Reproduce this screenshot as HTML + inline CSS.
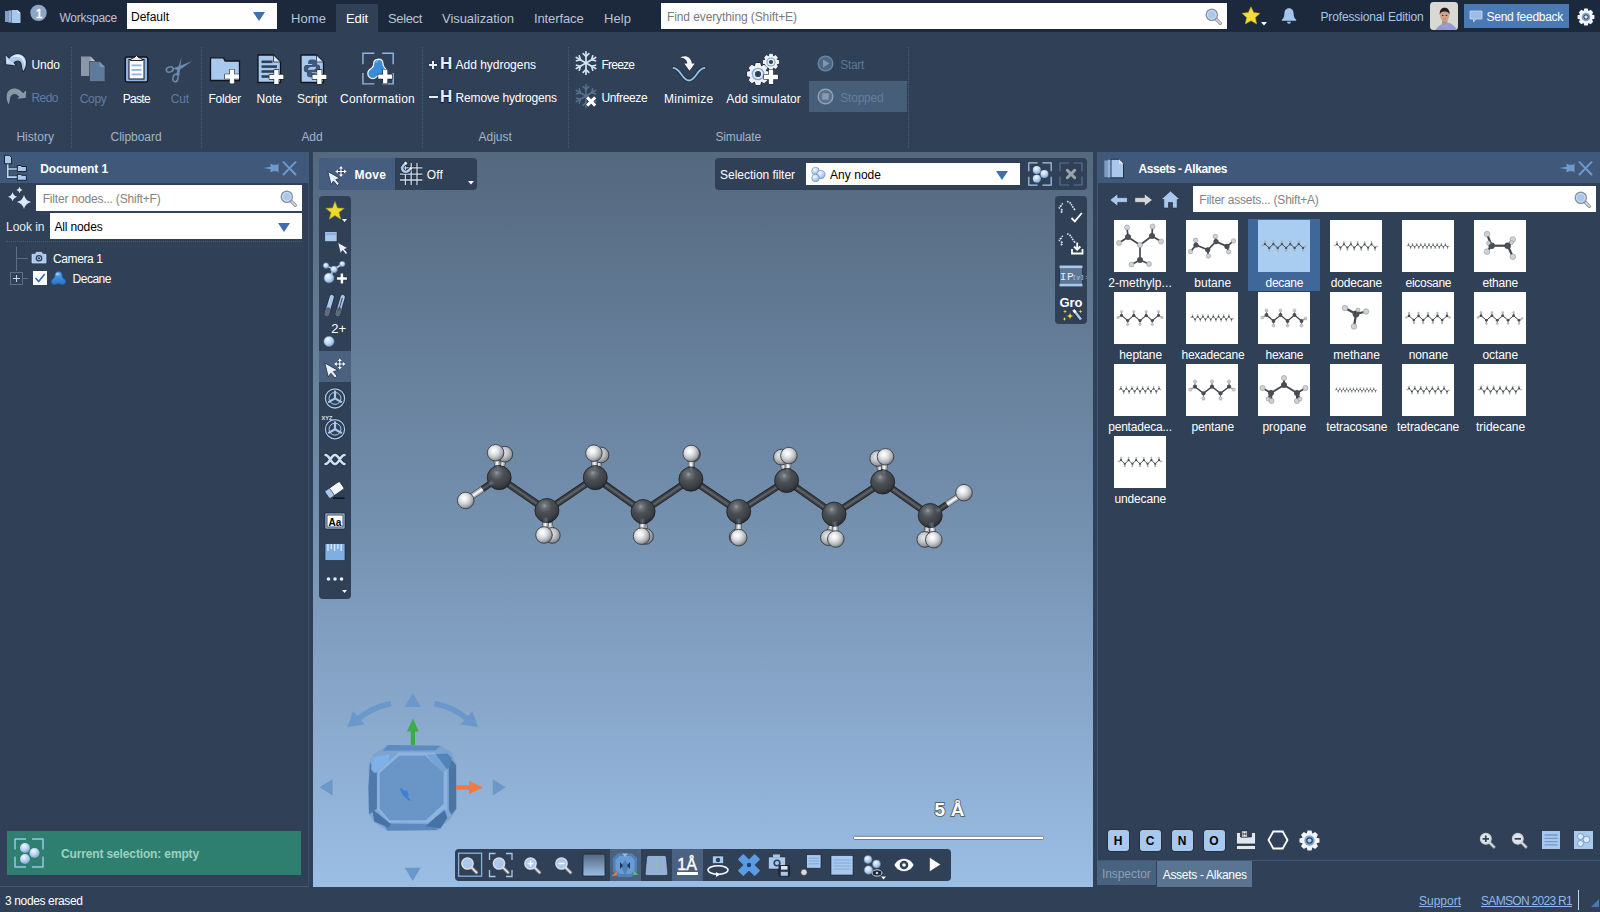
<!DOCTYPE html>
<html lang="en"><head><meta charset="utf-8"><title>SAMSON</title><style>
html,body{margin:0;padding:0;}
body{width:1600px;height:912px;overflow:hidden;background:#304056;position:relative;font-family:"Liberation Sans",sans-serif;}
.b{position:absolute;display:block;}
.t{position:absolute;white-space:nowrap;line-height:16px;display:block;}
</style></head>
<body>
<!-- top -->
<div class="b" style="left:0px;top:0px;width:1600px;height:32px;background:#1c283b;"></div>
<svg class="b" style="left:4px;top:9px;" width="18" height="15" viewBox="0 0 18 15"><rect x="1" y="2" width="3" height="11" fill="#7f9fc6"/><rect x="4.2" y="1.5" width="3" height="12" fill="#94b4da"/>
<path d="M7.5 1h6l3 3v10h-9z" fill="#a8c8ee"/><path d="M13.5 1v3h3z" fill="#dce9f8"/></svg>
<svg class="b" style="left:29px;top:4px;" width="19" height="19" viewBox="0 0 19 19"><circle cx="9.500" cy="8.850" r="8.200" fill="#8ca6c5"/></svg>
<span class="t " style="left:35.8px;top:5.8px;font-size:12px;color:#ffffff;letter-spacing:-0.67px;-webkit-text-stroke:.5px #fff;">1</span>
<span class="t " style="left:59.4px;top:10px;font-size:12px;color:#b9c5d6;letter-spacing:-0.24px;">Workspace</span>
<div class="b" style="left:127px;top:3px;width:150px;height:26px;background:#fff;"></div>
<span class="t " style="left:131px;top:9px;font-size:12px;color:#000;letter-spacing:-0.00px;">Default</span>
<svg class="b" style="left:253px;top:12px;" width="12" height="9" viewBox="0 0 12 9"><polygon points="0,0 12,0 6,9" fill="#3f6fae"/></svg>
<div class="b" style="left:336px;top:4px;width:42px;height:28px;background:#304056;"></div>
<span class="t " style="left:291px;top:11px;font-size:13px;color:#b9c5d6;letter-spacing:0.08px;">Home</span>
<span class="t " style="left:346px;top:11px;font-size:13px;color:#fff;letter-spacing:-0.10px;">Edit</span>
<span class="t " style="left:388px;top:11px;font-size:13px;color:#b9c5d6;letter-spacing:-0.35px;">Select</span>
<span class="t " style="left:442px;top:11px;font-size:13px;color:#b9c5d6;letter-spacing:-0.06px;">Visualization</span>
<span class="t " style="left:534px;top:11px;font-size:13px;color:#b9c5d6;letter-spacing:-0.12px;">Interface</span>
<span class="t " style="left:604px;top:11px;font-size:13px;color:#b9c5d6;letter-spacing:0.07px;">Help</span>
<div class="b" style="left:661px;top:3px;width:566px;height:26px;background:#fff;"></div>
<span class="t " style="left:667px;top:9px;font-size:12px;color:#7a7a7a;letter-spacing:-0.10px;">Find everything (Shift+E)</span>
<svg class="b" style="left:1205px;top:7.5px;" width="17" height="17" viewBox="0 0 17 17"><line x1="10.5" y1="10.5" x2="15.3" y2="15.3" stroke="#8a8f96" stroke-width="3.2" stroke-linecap="round"/>
<line x1="10.5" y1="10.5" x2="15.3" y2="15.3" stroke="#d8dde3" stroke-width="1.6" stroke-linecap="round"/>
<circle cx="6.8" cy="6.8" r="5.6" fill="#a9c8ee" stroke="#8c9198" stroke-width="1.4"/>
<circle cx="6.8" cy="6.8" r="4.3" fill="none" stroke="#d5e4f7" stroke-width="0.9"/></svg>
<svg class="b" style="left:1241px;top:6px;" width="20" height="19" viewBox="0 0 20 19"><polygon points="10,0.8 12.7,6.6 19,7.3 14.3,11.6 15.7,17.9 10,14.7 4.3,17.9 5.7,11.6 1,7.3 7.3,6.6" fill="#f2dd3a" stroke="#b9a51f" stroke-width="0.6"/></svg>
<svg class="b" style="left:1261px;top:21.5px;" width="6" height="4" viewBox="0 0 6 4"><polygon points="0,0 6,0 3,3.5" fill="#fff"/></svg>
<svg class="b" style="left:1280px;top:7px;" width="18" height="18" viewBox="0 0 18 18"><path d="M9 1.2c-3 0-4.6 2.3-4.6 5.2 0 3.4-1.2 5-2.6 6.3v1h14.4v-1c-1.4-1.3-2.6-2.9-2.6-6.300 0-2.9-1.600-5.200-4.600-5.200z" fill="#a5c4ea"/><path d="M7 14.800a2 2 0 0 0 4 0z" fill="#a5c4ea"/></svg>
<span class="t " style="left:1320.5px;top:9px;font-size:12px;color:#a9c6ea;letter-spacing:-0.15px;">Professional Edition</span>
<svg class="b" style="left:1430px;top:2px;" width="28" height="28" viewBox="0 0 28 28"><defs><clipPath id="avc"><rect width="28" height="28" rx="3.500"/></clipPath></defs><g clip-path="url(#avc)"><rect width="28" height="28" fill="#d9d8d3"/>
<path d="M5 28.500c2.500-4 6-6.800 9.500-7.300l4.500-.5c3.500 1.200 7 4.500 8.500 7.800z" fill="#9a98cf"/><path d="M11.500 24l5-3 3 1.500-4 4z" fill="#8fa6d8"/><path d="M12 17h5.500v4.300l-3.500 1.700-2-1.500z" fill="#b98f78"/>
<ellipse cx="14.600" cy="13.600" rx="4.600" ry="5.800" fill="#cda38b"/><path d="M9.800 13c-.5-4.500 1.500-7.200 4.800-7.200s5.500 2.600 4.900 7.200c-.5-2.300-1.500-3.600-4.900-3.600s-4.300 1.300-4.800 3.600z" fill="#231c17"/>
<ellipse cx="12.700" cy="13.400" rx=".9" ry=".6" fill="#4a3228"/><ellipse cx="16.400" cy="13.400" rx=".9" ry=".6" fill="#4a3228"/><path d="M13.200 16.800q1.400.8 2.800 0" stroke="#9a6a58" stroke-width=".6" fill="none"/></g></svg>
<div class="b" style="left:1464px;top:4px;width:105px;height:24px;background:#4b79b3;"></div>
<svg class="b" style="left:1469px;top:10px;" width="14" height="13" viewBox="0 0 14 13"><path d="M1 1h12v8h-6l-2.500 3v-3h-3.500z" fill="#9dbce4" stroke="#c8daf2" stroke-width="0.8"/></svg>
<span class="t " style="left:1486.5px;top:9px;font-size:12px;color:#fff;letter-spacing:-0.27px;">Send feedback</span>
<svg class="b" style="left:1577px;top:7.5px;" width="18" height="18" viewBox="0 0 18 18"><polygon points="17.43,7.29 17.43,10.71 14.92,11.43 14.91,11.47 16.17,13.75 13.75,16.17 11.47,14.91 11.43,14.92 10.71,17.43 7.29,17.43 6.57,14.92 6.53,14.91 4.25,16.17 1.83,13.75 3.09,11.47 3.08,11.43 0.57,10.71 0.57,7.29 3.08,6.57 3.09,6.53 1.83,4.25 4.25,1.83 6.53,3.09 6.57,3.08 7.29,0.57 10.71,0.57 11.43,3.08 11.47,3.09 13.75,1.83 16.17,4.25 14.91,6.53 14.92,6.57" fill="#f2f4f7"/><circle cx="9" cy="9" r="4.300" fill="#7fa3d0"/><circle cx="9" cy="9" r="2.500" fill="#1c283b"/><circle cx="9" cy="9" r="1.700" fill="#dfe8f3"/></svg>
<!-- ribbon -->
<div class="b" style="left:0px;top:32px;width:1600px;height:120px;background:#304056;"></div>
<svg class="b" style="left:3px;top:51px;" width="27" height="24" viewBox="0 0 27 24"><path d="M2.600 4.300L3 13.300L12.800 14.400L10.500 11.700C13 8.700 17 8.400 18.300 12C19.200 14.500 18.800 17 20.300 20.300C23.300 16 24.300 10 21.200 6C17.500 1.500 10 2.300 6.200 7.700Z" fill="#a8c8ee" stroke="#151b24" stroke-width="1.300" stroke-linejoin="round" paint-order="stroke"/><path d="M3.600 6l.300 6.300 6.500.8-1.500-1.800c-1.500-.5-3.500-2.500-5.300-5.300z" fill="#cfe1f6"/><path d="M8 7c3.500-4 9.500-4.300 12.300-.5 2.300 3 2 7 .8 10.500.3-4-.3-7-2.300-9-2.800-2.800-7-2.800-10.800-1z" fill="#e3eefb"/></svg>
<span class="t " style="left:31.5px;top:57px;font-size:12px;color:#fff;letter-spacing:-0.05px;">Undo</span>
<svg class="b" style="left:3px;top:84.5px;" width="27" height="24" viewBox="0 0 27 24"><g transform="translate(26.200,0) scale(-1,1)"><path d="M2.600 4.300L3 13.300L12.800 14.400L10.500 11.700C13 8.700 17 8.400 18.300 12C19.200 14.500 18.800 17 20.300 20.300C23.300 16 24.300 10 21.200 6C17.500 1.500 10 2.300 6.200 7.700Z" fill="#8a97a8" stroke="#2a3546" stroke-width=".8" stroke-linejoin="round"/></g></svg>
<span class="t " style="left:31.5px;top:90px;font-size:12px;color:#5f7da2;letter-spacing:-0.60px;">Redo</span>
<span class="t " style="left:16.4px;top:129px;font-size:12px;color:#a3b4c8;letter-spacing:0.04px;">History</span>
<div class="b" style="left:71px;top:47px;width:0;height:101px;border-left:1px dotted #42607a;"></div>
<svg class="b" style="left:79px;top:54px;" width="30" height="30" viewBox="0 0 30 30"><path d="M2 2.500h9.500l5 5v14.500h-14.500z" fill="#8b97a7"/><path d="M11.500 2.500v5h5z" fill="#b4bcc7"/>
<path d="M10.500 7.500h10l5.500 5.500v14.500h-15.500z" fill="#5f7b9c" stroke="#2b3a4e" stroke-width=".6"/><path d="M20.500 7.500v5.500h5.500z" fill="#7d97b5"/></svg>
<span class="t " style="left:79.7px;top:90.5px;font-size:12px;color:#5f7da2;letter-spacing:-0.30px;">Copy</span>
<svg class="b" style="left:123px;top:53px;" width="27" height="31" viewBox="0 0 27 31"><rect x="2.300" y="4" width="22.500" height="25" rx="2" fill="#8fb5e4" stroke="#10151c" stroke-width="1.400"/>
<rect x="6" y="6.500" width="15" height="19.500" fill="#fff" stroke="#10151c" stroke-width="1"/>
<path d="M7.500 7.500c0-2 2.500-2.500 4-3l2-2 2 2c1.500.5 4 1 4 3z" fill="#f2ede0" stroke="#10151c" stroke-width=".9"/>
<rect x="8.500" y="11.500" width="10" height="1.800" fill="#8fb5e4"/><rect x="8.500" y="16" width="10" height="1.800" fill="#8fb5e4"/><rect x="8.500" y="20.500" width="10" height="1.800" fill="#8fb5e4"/></svg>
<span class="t " style="left:122.8px;top:90.5px;font-size:12px;color:#fff;letter-spacing:-0.70px;">Paste</span>
<svg class="b" style="left:164px;top:55px;" width="31" height="29" viewBox="0 0 31 29"><g fill="none" stroke="#6c8cb1" stroke-width="1.500" stroke-linecap="round"><ellipse cx="5.800" cy="14.500" rx="3.600" ry="2.500" transform="rotate(-20 5.800 14.500)"/><ellipse cx="11.500" cy="23" rx="2.500" ry="3.800" transform="rotate(12 11.500 23)"/></g>
<path d="M9 13.500l19.500-7.500-14 9.500z" fill="#6c8cb1"/><path d="M12 19.500l5.500-17.500-2.300 19z" fill="#6c8cb1"/></svg>
<span class="t " style="left:170.8px;top:90.5px;font-size:12px;color:#5f7da2;letter-spacing:-0.16px;">Cut</span>
<span class="t " style="left:110.6px;top:129px;font-size:12px;color:#a3b4c8;letter-spacing:-0.04px;">Clipboard</span>
<div class="b" style="left:201px;top:47px;width:0;height:101px;border-left:1px dotted #42607a;"></div>
<svg class="b" style="left:208px;top:54px;" width="36" height="32" viewBox="0 0 36 32"><path d="M2.500 3.800h13l1.500 3.200h14.500v19.500h-29z" fill="#a8c8ee" stroke="#10151c" stroke-width="1.300" stroke-linejoin="round"/><path d="M21.8 15.5h4.4v4.8h4.8v4.4h-4.8v4.8h-4.4v-4.8h-4.8v-4.4h4.8z" fill="#fff" stroke="#1a222e" stroke-width="1.2" stroke-linejoin="round" paint-order="stroke"/></svg>
<span class="t " style="left:208.5px;top:90.5px;font-size:12px;color:#fff;letter-spacing:-0.25px;">Folder</span>
<svg class="b" style="left:256.6px;top:53.6px;" width="34" height="32" viewBox="0 0 34 32"><path d="M1 1h15.500l7 7v20.500h-22.500z" fill="#a8c8ee" stroke="#10151c" stroke-width="1.300" stroke-linejoin="round"/><path d="M16.500 1v7h7z" fill="#d9e7f7" stroke="#10151c" stroke-width=".7" stroke-linejoin="round"/><g fill="#2f3f55"><rect x="4.500" y="6.500" width="11" height="2.600"/><rect x="4.500" y="11.300" width="15.500" height="2.600"/><rect x="4.500" y="16.200" width="15.500" height="2.600"/><rect x="4.500" y="21.200" width="9" height="2.600"/></g><path d="M17.2 15.9h4.4v4.8h4.8v4.4h-4.8v4.8h-4.4v-4.8h-4.8v-4.4h4.8z" fill="#fff" stroke="#1a222e" stroke-width="1.2" stroke-linejoin="round" paint-order="stroke"/></svg>
<span class="t " style="left:256.6px;top:90.5px;font-size:12px;color:#fff;letter-spacing:0.01px;">Note</span>
<svg class="b" style="left:299.6px;top:53.6px;" width="34" height="32" viewBox="0 0 34 32"><path d="M1 1h15.500l7 7v20.500h-22.500z" fill="#a8c8ee" stroke="#10151c" stroke-width="1.300" stroke-linejoin="round"/><path d="M16.500 1v7h7z" fill="#d9e7f7" stroke="#10151c" stroke-width=".7" stroke-linejoin="round"/><g fill="#3f5778"><path d="M11.800 5.500c-3 0-3.600 1.300-3.600 2.600v2h4v.8h-5.700c-1.800 0-2.700 1.500-2.700 3.800s.9 3.600 2.500 3.600h1.700v-2.400c0-1.700 1.400-2.900 3-2.900h3.800c1.300 0 2.300-1 2.300-2.400v-2.500c0-1.400-1.200-2.600-5.300-2.600z"/><path d="M12.200 23.300c3 0 3.600-1.300 3.600-2.600v-2h-4v-.8h5.700c1.800 0 2.700-1.500 2.700-3.800s-.9-3.600-2.500-3.600h-1.700v2.400c0 1.700-1.400 2.900-3 2.900h-3.800c-1.300 0-2.300 1-2.300 2.400v2.500c0 1.400 1.200 2.600 5.300 2.600z"/></g><path d="M17.2 15.9h4.4v4.8h4.8v4.4h-4.8v4.8h-4.4v-4.8h-4.8v-4.4h4.8z" fill="#fff" stroke="#1a222e" stroke-width="1.2" stroke-linejoin="round" paint-order="stroke"/></svg>
<span class="t " style="left:297px;top:90.5px;font-size:12px;color:#fff;letter-spacing:-0.11px;">Script</span>
<svg class="b" style="left:362px;top:52px;" width="33" height="33.5" viewBox="0 0 36 36"><g fill="none" stroke="#8fb5e4" stroke-width="1.600"><path d="M1 13v-12h12.500"/><path d="M22 1h12v12"/><path d="M1 22.500v12h12.500"/><path d="M22 34.500h12v-12"/></g><path d="M17 5c3.500 0 5.800 2.500 5.800 5.800 0 2.500.8 3.800 2.500 5.500 2.500 2.500 2 6-1 7.500-2.800 1.400-5 .2-7.300 1.500-2 1.200-3 4-6.500 4-3.800 0-6.500-3-6.500-6.500 0-3.200 2-5 4.500-6.500 2.500-1.600 2.800-3 2.800-5.300 0-3.300 2.400-5.500 5.700-5.500z" transform="translate(2.800,3) scale(.88)" fill="#3a8cdb" stroke="#f2f6fb" stroke-width="1.500"/><path d="M14.500 10.500c1-1.600 3-2.300 4.800-1.300-1.600.2-3 1-3.800 2.800z" fill="#7fb7ec"/></svg>
<svg class="b" style="left:376px;top:67px;" width="20" height="20" viewBox="0 0 20 20"><path d="M7 2.6h4.4v4.8h4.8v4.4h-4.8v4.8h-4.4v-4.8h-4.8v-4.4h4.8z" fill="#fff" stroke="#1a222e" stroke-width="1.2" stroke-linejoin="round" paint-order="stroke"/></svg>
<span class="t " style="left:340px;top:90.5px;font-size:12px;color:#fff;letter-spacing:0.25px;">Conformation</span>
<span class="t " style="left:301.4px;top:129px;font-size:12px;color:#a3b4c8;letter-spacing:-0.05px;">Add</span>
<div class="b" style="left:422px;top:47px;width:0;height:101px;border-left:1px dotted #42607a;"></div>
<div class="b" style="left:428.8px;top:63.5px;width:8.4px;height:2.3px;background:#e6eef8;box-shadow:0 0 1.500px #10151c;"></div>
<div class="b" style="left:431.85px;top:60.5px;width:2.3px;height:8.3px;background:#e6eef8;box-shadow:0 0 1.500px #10151c;"></div>
<div class="b" style="left:428.8px;top:63.5px;width:8.4px;height:2.3px;background:#e6eef8;"></div>
<span class="t " style="left:440px;top:56.3px;font-size:17px;color:#e6eef8;letter-spacing:-1.08px;font-weight:bold;text-shadow:0 0 2px #10151c,0 1px 1px #10151c;">H</span>
<span class="t " style="left:455.6px;top:57px;font-size:12px;color:#fff;letter-spacing:-0.02px;">Add hydrogens</span>
<div class="b" style="left:429px;top:95.5px;width:8.6px;height:2.5px;background:#e6eef8;box-shadow:0 0 1.500px #10151c;"></div>
<span class="t " style="left:440px;top:89.3px;font-size:17px;color:#e6eef8;letter-spacing:-1.08px;font-weight:bold;text-shadow:0 0 2px #10151c,0 1px 1px #10151c;">H</span>
<span class="t " style="left:455.6px;top:90px;font-size:12px;color:#fff;letter-spacing:-0.17px;">Remove hydrogens</span>
<span class="t " style="left:478.4px;top:129px;font-size:12px;color:#a3b4c8;letter-spacing:0.04px;">Adjust</span>
<div class="b" style="left:568px;top:47px;width:0;height:101px;border-left:1px dotted #42607a;"></div>
<svg class="b" style="left:573px;top:50px;" width="26" height="26" viewBox="0 0 26 26"><g stroke="#d3e3f4" stroke-width="1.7" stroke-linecap="round" fill="none"><line x1="13.00" y1="13.00" x2="13.00" y2="24.20"/><line x1="13.00" y1="19.50" x2="15.85" y2="22.35"/><line x1="13.00" y1="19.50" x2="10.15" y2="22.35"/><line x1="13.00" y1="13.00" x2="3.30" y2="18.60"/><line x1="7.37" y1="16.25" x2="6.33" y2="20.14"/><line x1="7.37" y1="16.25" x2="3.48" y2="15.20"/><line x1="13.00" y1="13.00" x2="3.30" y2="7.40"/><line x1="7.37" y1="9.75" x2="3.48" y2="10.80"/><line x1="7.37" y1="9.75" x2="6.33" y2="5.86"/><line x1="13.00" y1="13.00" x2="13.00" y2="1.80"/><line x1="13.00" y1="6.50" x2="10.15" y2="3.65"/><line x1="13.00" y1="6.50" x2="15.85" y2="3.65"/><line x1="13.00" y1="13.00" x2="22.70" y2="7.40"/><line x1="18.63" y1="9.75" x2="19.67" y2="5.86"/><line x1="18.63" y1="9.75" x2="22.52" y2="10.80"/><line x1="13.00" y1="13.00" x2="22.70" y2="18.60"/><line x1="18.63" y1="16.25" x2="22.52" y2="15.20"/><line x1="18.63" y1="16.25" x2="19.67" y2="20.14"/></g></svg>
<span class="t " style="left:601.4px;top:57px;font-size:12px;color:#fff;letter-spacing:-0.74px;">Freeze</span>
<svg class="b" style="left:573px;top:83px;" width="26" height="26" viewBox="0 0 26 26"><g stroke="#56738f" stroke-width="1.5" stroke-linecap="round" fill="none"><line x1="13.00" y1="13.00" x2="13.00" y2="24.20"/><line x1="13.00" y1="19.50" x2="15.85" y2="22.35"/><line x1="13.00" y1="19.50" x2="10.15" y2="22.35"/><line x1="13.00" y1="13.00" x2="3.30" y2="18.60"/><line x1="7.37" y1="16.25" x2="6.33" y2="20.14"/><line x1="7.37" y1="16.25" x2="3.48" y2="15.20"/><line x1="13.00" y1="13.00" x2="3.30" y2="7.40"/><line x1="7.37" y1="9.75" x2="3.48" y2="10.80"/><line x1="7.37" y1="9.75" x2="6.33" y2="5.86"/><line x1="13.00" y1="13.00" x2="13.00" y2="1.80"/><line x1="13.00" y1="6.50" x2="10.15" y2="3.65"/><line x1="13.00" y1="6.50" x2="15.85" y2="3.65"/><line x1="13.00" y1="13.00" x2="22.70" y2="7.40"/><line x1="18.63" y1="9.75" x2="19.67" y2="5.86"/><line x1="18.63" y1="9.75" x2="22.52" y2="10.80"/><line x1="13.00" y1="13.00" x2="22.70" y2="18.60"/><line x1="18.63" y1="16.25" x2="22.52" y2="15.20"/><line x1="18.63" y1="16.25" x2="19.67" y2="20.14"/></g><path d="M-5.200 -3l2.200-2.200 3 3 3-3 2.200 2.200-3 3 3 3-2.200 2.200-3-3-3 3-2.200-2.200 3-3z" transform="translate(18.200,18.500)" fill="#fff" stroke="#1a222e" stroke-width="1" paint-order="stroke"/></svg>
<span class="t " style="left:601.4px;top:90px;font-size:12px;color:#fff;letter-spacing:-0.35px;">Unfreeze</span>
<svg class="b" style="left:670px;top:52px;" width="38" height="32" viewBox="0 0 38 32"><path d="M3.500 16c7 0 8.500 12.500 15.500 12.500s8.500-12.500 15.500-12.500" fill="none" stroke="#10151c" stroke-width="3.600" stroke-linecap="round" opacity=".55"/>
<path d="M3.500 16c7 0 8.500 12.500 15.500 12.500s8.500-12.500 15.500-12.500" fill="none" stroke="#8fbdee" stroke-width="1.900" stroke-linecap="round"/>
<path d="M10 5.500c5.500-3 11.500-.5 11.800 6h3l-5.300 7.300-5.300-7.300h3c0-3.800-3.300-5.800-7.200-6z" fill="#f3f6fa" stroke="#1a222e" stroke-width="1" paint-order="stroke"/></svg>
<span class="t " style="left:664px;top:90.5px;font-size:12px;color:#fff;letter-spacing:0.25px;">Minimize</span>
<svg class="b" style="left:745.4px;top:51.5px;" width="38" height="36" viewBox="0 0 38 36"><polygon points="34.13,8.35 34.13,11.65 31.87,12.28 31.76,12.54 32.92,14.59 30.59,16.92 28.54,15.76 28.28,15.87 27.65,18.13 24.35,18.13 23.72,15.87 23.46,15.76 21.41,16.92 19.08,14.59 20.24,12.54 20.13,12.28 17.87,11.65 17.87,8.35 20.13,7.72 20.24,7.46 19.08,5.41 21.41,3.08 23.46,4.24 23.72,4.13 24.35,1.87 27.65,1.87 28.28,4.13 28.54,4.24 30.59,3.08 32.92,5.41 31.76,7.46 31.87,7.72" fill="#eef1f5" stroke="#1a222e" stroke-width="1" paint-order="stroke"/><circle cx="26" cy="10" r="4.600" fill="#7ea6d6"/><circle cx="26" cy="10" r="3.500" fill="#e8edf3"/><circle cx="26" cy="10" r="2.100" fill="#304056"/><polygon points="23.98,19.77 23.98,24.23 21.02,25.11 20.87,25.47 22.34,28.19 19.19,31.34 16.47,29.87 16.11,30.02 15.23,32.98 10.77,32.98 9.89,30.02 9.53,29.87 6.81,31.34 3.66,28.19 5.13,25.47 4.98,25.11 2.02,24.23 2.02,19.77 4.98,18.89 5.13,18.53 3.66,15.81 6.81,12.66 9.53,14.13 9.89,13.98 10.77,11.02 15.23,11.02 16.11,13.98 16.47,14.13 19.19,12.66 22.34,15.81 20.87,18.53 21.02,18.89" fill="#eef1f5" stroke="#1a222e" stroke-width="1" paint-order="stroke"/><circle cx="13" cy="22" r="6.300" fill="#7ea6d6"/><circle cx="13" cy="22" r="5" fill="#e8edf3"/><circle cx="13" cy="22" r="3.100" fill="#304056"/><path d="M23.8 18h4.4v4.8h4.8v4.4h-4.8v4.8h-4.4v-4.8h-4.8v-4.4h4.8z" fill="#fff" stroke="#1a222e" stroke-width="1.2" stroke-linejoin="round" paint-order="stroke"/></svg>
<span class="t " style="left:726.3px;top:90.5px;font-size:12px;color:#fff;letter-spacing:0.10px;">Add simulator</span>
<svg class="b" style="left:816.5px;top:54.5px;" width="17" height="17" viewBox="0 0 17 17"><circle cx="8.500" cy="8.500" r="7.300" fill="#4c6685" stroke="#6985a8" stroke-width="1.400"/><path d="M6 4.500l6.500 4-6.500 4z" fill="#7f98b8"/></svg>
<span class="t " style="left:840.3px;top:57px;font-size:12px;color:#5a7798;letter-spacing:-0.33px;">Start</span>
<div class="b" style="left:809px;top:81px;width:98px;height:31px;background:#475e78;"></div>
<svg class="b" style="left:816.5px;top:87.5px;" width="17" height="17" viewBox="0 0 17 17"><circle cx="8.500" cy="8.500" r="7.300" fill="#5a718c" stroke="#8ea3bc" stroke-width="1.400"/><rect x="5.200" y="5.200" width="6.600" height="6.600" rx="1" fill="#8c9bb0"/></svg>
<span class="t " style="left:840.3px;top:89.5px;font-size:12px;color:#627d9e;letter-spacing:-0.22px;">Stopped</span>
<span class="t " style="left:715.4px;top:129px;font-size:12px;color:#a3b4c8;letter-spacing:-0.14px;">Simulate</span>
<div class="b" style="left:908px;top:47px;width:0;height:101px;border-left:1px dotted #42607a;"></div>
<!-- left -->
<div class="b" style="left:0px;top:152px;width:309px;height:735px;background:#304056;border-bottom:1px solid #40597a;border-right:1px solid #3a4f6b;box-sizing:border-box;"></div>
<div class="b" style="left:0px;top:152px;width:309px;height:31px;background:#40597a;"></div>
<svg class="b" style="left:3px;top:154px;" width="26" height="28" viewBox="0 0 26 28"><path d="M4.700 9.500v13.700h9.500M4.700 15h9.500" fill="none" stroke="#10151c" stroke-width="3.200" opacity=".5"/>
<path d="M4.700 9.500v13.700h9.500M4.700 15h9.500" fill="none" stroke="#bcd6f5" stroke-width="1.700"/>
<path d="M1.500 1.300h4.800l2.200 2.200v6.300h-7z" fill="#a8c8ee" stroke="#10151c" stroke-width=".9"/>
<path d="M14.300 11.500h3.500l.8 1h4.800v5h-9.100z" fill="#a8c8ee" stroke="#10151c" stroke-width=".9"/>
<path d="M14.300 20.300h3.500l.8 1h4.800v5h-9.100z" fill="#a8c8ee" stroke="#10151c" stroke-width=".9"/></svg>
<span class="t " style="left:40.2px;top:161px;font-size:12px;color:#fff;letter-spacing:-0.09px;font-weight:bold;">Document 1</span>
<svg class="b" style="left:263.3px;top:161px;" width="34" height="16" viewBox="0 0 34 16"><path d="M0.500 7l7-1.200v-3.300l2.300 1.300h4.500l1.200-1.800v10l-1.200-1.800h-4.500l-2.300 1.300v-3.300z" fill="#6c9bd0"/>
<g stroke="#6c9bd0" stroke-width="1.900" stroke-linecap="round"><line x1="20.500" y1="1.200" x2="32.500" y2="13.500"/><line x1="32.500" y1="1.200" x2="20.500" y2="13.500"/></g></svg>
<svg class="b" style="left:6px;top:185px;" width="28" height="28" viewBox="0 0 28 28"><g fill="#dbe8f7" stroke="#1f2a3a" stroke-width=".5" paint-order="stroke"><path d="M18 9.7Q19.3 15.7 25.3 17Q19.3 18.3 18 24.3Q16.7 18.3 10.7 17Q16.7 15.7 18 9.7z"/><path d="M6.6 6.9Q7.5 10.8 11.4 11.7Q7.5 12.6 6.6 16.5Q5.7 12.6 1.8 11.7Q5.7 10.8 6.6 6.9z"/><path d="M13.5 1.7Q14.1 4.4 16.8 5Q14.1 5.6 13.5 8.3Q12.9 5.6 10.2 5Q12.9 4.4 13.5 1.7z"/></g></svg>
<div class="b" style="left:36px;top:185px;width:266px;height:26px;background:#fff;"></div>
<span class="t " style="left:42.7px;top:190.6px;font-size:12px;color:#838383;letter-spacing:-0.18px;">Filter nodes... (Shift+F)</span>
<svg class="b" style="left:280px;top:189.5px;" width="17" height="17" viewBox="0 0 17 17"><line x1="10.5" y1="10.5" x2="15.3" y2="15.3" stroke="#8a8f96" stroke-width="3.2" stroke-linecap="round"/>
<line x1="10.5" y1="10.5" x2="15.3" y2="15.3" stroke="#d8dde3" stroke-width="1.6" stroke-linecap="round"/>
<circle cx="6.8" cy="6.8" r="5.6" fill="#a9c8ee" stroke="#8c9198" stroke-width="1.4"/>
<circle cx="6.8" cy="6.8" r="4.3" fill="none" stroke="#d5e4f7" stroke-width="0.9"/></svg>
<span class="t " style="left:6px;top:219px;font-size:12px;color:#e6edf5;letter-spacing:-0.03px;">Look in</span>
<div class="b" style="left:50px;top:213px;width:252px;height:26px;background:#fff;"></div>
<span class="t " style="left:54.5px;top:219px;font-size:12px;color:#000;letter-spacing:-0.15px;">All nodes</span>
<svg class="b" style="left:278px;top:222.5px;" width="12" height="9" viewBox="0 0 12 9"><polygon points="0,0 12,0 6,9" fill="#3f6fae"/></svg>
<div class="b" style="left:6px;top:241px;width:296px;height:0;border-top:1px dotted #3a6670;"></div>
<div class="b" style="left:16px;top:247px;width:11px;height:11px;border-left:1px solid #5b6f88;border-bottom:1px solid #5b6f88;"></div>
<div class="b" style="left:16px;top:258px;width:0;height:13px;border-left:1px solid #5b6f88;"></div>
<svg class="b" style="left:31px;top:251px;" width="16" height="13" viewBox="0 0 16 13"><path d="M1 3.300h3.200l1.200-2h5.200l1.200 2h3.200v8.700h-14z" fill="#a8c8ee" stroke="#dcebfb" stroke-width=".6"/><circle cx="8" cy="7.300" r="3.300" fill="#304056"/><circle cx="8" cy="7.300" r="2" fill="#a8c8ee"/><circle cx="8" cy="7.300" r="1.100" fill="#304056"/></svg>
<span class="t " style="left:53px;top:251px;font-size:12px;color:#fff;letter-spacing:-0.40px;">Camera 1</span>
<div class="b" style="left:10px;top:272px;width:11px;height:11px;border:1px solid #5b6f88;"></div>
<div class="b" style="left:13px;top:278px;width:7px;height:1px;background:#c8d4e2;"></div>
<div class="b" style="left:16px;top:275px;width:1px;height:7px;background:#c8d4e2;"></div>
<div class="b" style="left:22px;top:278px;width:6px;height:1px;background:#5b6f88;"></div>
<div class="b" style="left:33px;top:271px;width:14px;height:14px;background:#fff;"></div>
<svg class="b" style="left:33px;top:271px;" width="14" height="14" viewBox="0 0 14 14"><path d="M2.500 7l3.200 3.500 6-7.500" fill="none" stroke="#2f6db5" stroke-width="1.700"/></svg>
<svg class="b" style="left:50px;top:270px;" width="17" height="16" viewBox="0 0 17 16"><defs><linearGradient id="mg" x1="0" y1="0" x2="0" y2="1"><stop offset="0" stop-color="#5aa6ea"/><stop offset="1" stop-color="#2372c4"/></linearGradient></defs>
<path d="M8.500 1.500c2.200 0 3.500 1.600 3.500 3.600 0 1.700.6 2.700 2 3.700 1.800 1.300 2.300 3.500.8 5-1.300 1.300-3.300 1.100-4.600.3-1-.6-2.400-.6-3.400 0-1.300.8-3.300 1-4.600-.3-1.500-1.500-1-3.700.8-5 1.400-1 2-2 2-3.700 0-2 1.300-3.600 3.500-3.600z" fill="url(#mg)" stroke="#1d5ea6" stroke-width=".6"/><ellipse cx="7.500" cy="4.200" rx="1.800" ry="1.200" fill="#a6d2f7" opacity=".8"/></svg>
<span class="t " style="left:72.5px;top:271px;font-size:12px;color:#fff;letter-spacing:-0.48px;">Decane</span>
<div class="b" style="left:7px;top:831px;width:294px;height:44px;background:#2f7f70;"></div>
<svg class="b" style="left:14px;top:838px;" width="30" height="30" viewBox="0 0 30 30"><g fill="none" stroke="#9fc3e6" stroke-width="1.500" stroke-linejoin="round"><path d="M1 11.500v-10.500h11"/><path d="M18 1h11v10.500"/><path d="M1 18.500v10.500h11"/><path d="M18 29h11v-10.500"/></g>
<defs><radialGradient id="sg14" cx=".4" cy=".3" r=".7"><stop offset="0" stop-color="#f4f9ff"/><stop offset=".6" stop-color="#b5d0f0"/><stop offset="1" stop-color="#7da3d0"/></radialGradient></defs>
<circle cx="11" cy="10" r="5" fill="url(#sg14)"/><circle cx="20.500" cy="15" r="5" fill="url(#sg14)"/><circle cx="11" cy="21" r="5" fill="url(#sg14)"/></svg>
<span class="t " style="left:61px;top:846px;font-size:12px;color:#9ad2bf;letter-spacing:-0.14px;font-weight:bold;">Current selection: empty</span>
<!-- viewport -->
<svg class="b" style="left:313px;top:152px;" width="780" height="735" viewBox="0 0 780 735"><defs>
<radialGradient id="bl" cx=".38" cy=".32" r=".75"><stop offset="0" stop-color="#f6faff"/><stop offset=".55" stop-color="#b9d3f1"/><stop offset="1" stop-color="#7fa4d2"/></radialGradient>
<radialGradient id="gc" cx=".4" cy=".3" r=".74"><stop offset="0" stop-color="#989ea3"/><stop offset=".14" stop-color="#6d7378"/><stop offset=".4" stop-color="#4b5055"/><stop offset=".75" stop-color="#3c4045"/><stop offset="1" stop-color="#25282b"/></radialGradient>
<radialGradient id="gh" cx=".4" cy=".36" r=".72"><stop offset="0" stop-color="#ffffff"/><stop offset=".18" stop-color="#f3f4f5"/><stop offset=".45" stop-color="#d3d6d9"/><stop offset=".72" stop-color="#a6aaae"/><stop offset="1" stop-color="#54585d"/></radialGradient>
<radialGradient id="ghb" cx=".42" cy=".38" r=".7"><stop offset="0" stop-color="#e8eaeb"/><stop offset=".45" stop-color="#c0c3c6"/><stop offset=".8" stop-color="#8a8e93"/><stop offset="1" stop-color="#505459"/></radialGradient>
<linearGradient id="vg" x1="0" y1="0" x2="0" y2="1"><stop offset="0" stop-color="#54687e"/><stop offset=".5" stop-color="#7490af"/><stop offset="1" stop-color="#9bbee5"/></linearGradient>
</defs><rect width="780" height="735" fill="url(#vg)"/><g transform="translate(-313,-152)"><line x1="499.2" y1="477.7" x2="502.0" y2="465.9" stroke="#1e2124" stroke-width="6"/><line x1="499.2" y1="477.7" x2="502.0" y2="465.9" stroke="#34383d" stroke-width="4.6"/><line x1="499.2" y1="477.7" x2="502.0" y2="465.9" stroke="#50565c" stroke-width="1.92"/><line x1="502.0" y1="465.9" x2="504.8" y2="454.2" stroke="#4a4e53" stroke-width="6"/><line x1="502.0" y1="465.9" x2="504.8" y2="454.2" stroke="#a9adb2" stroke-width="4.6"/><line x1="502.0" y1="465.9" x2="504.8" y2="454.2" stroke="#dfe1e3" stroke-width="1.92"/><circle cx="504.8" cy="454.2" r="7.900" fill="url(#ghb)" stroke="#34383d" stroke-width=".9"/><line x1="546.9" y1="510.5" x2="549.6" y2="523.0" stroke="#1e2124" stroke-width="6"/><line x1="546.9" y1="510.5" x2="549.6" y2="523.0" stroke="#34383d" stroke-width="4.6"/><line x1="546.9" y1="510.5" x2="549.6" y2="523.0" stroke="#50565c" stroke-width="1.92"/><line x1="549.6" y1="523.0" x2="552.3" y2="535.4" stroke="#4a4e53" stroke-width="6"/><line x1="549.6" y1="523.0" x2="552.3" y2="535.4" stroke="#a9adb2" stroke-width="4.6"/><line x1="549.6" y1="523.0" x2="552.3" y2="535.4" stroke="#dfe1e3" stroke-width="1.92"/><circle cx="552.3" cy="535.4" r="7.900" fill="url(#ghb)" stroke="#34383d" stroke-width=".9"/><line x1="595.3" y1="477.7" x2="598.1" y2="466.4" stroke="#1e2124" stroke-width="6"/><line x1="595.3" y1="477.7" x2="598.1" y2="466.4" stroke="#34383d" stroke-width="4.6"/><line x1="595.3" y1="477.7" x2="598.1" y2="466.4" stroke="#50565c" stroke-width="1.92"/><line x1="598.1" y1="466.4" x2="601.0" y2="455.0" stroke="#4a4e53" stroke-width="6"/><line x1="598.1" y1="466.4" x2="601.0" y2="455.0" stroke="#a9adb2" stroke-width="4.6"/><line x1="598.1" y1="466.4" x2="601.0" y2="455.0" stroke="#dfe1e3" stroke-width="1.92"/><circle cx="601.0" cy="455.0" r="7.900" fill="url(#ghb)" stroke="#34383d" stroke-width=".9"/><line x1="643.1" y1="511.5" x2="644.3" y2="524.0" stroke="#1e2124" stroke-width="6"/><line x1="643.1" y1="511.5" x2="644.3" y2="524.0" stroke="#34383d" stroke-width="4.6"/><line x1="643.1" y1="511.5" x2="644.3" y2="524.0" stroke="#50565c" stroke-width="1.92"/><line x1="644.3" y1="524.0" x2="645.5" y2="536.4" stroke="#4a4e53" stroke-width="6"/><line x1="644.3" y1="524.0" x2="645.5" y2="536.4" stroke="#a9adb2" stroke-width="4.6"/><line x1="644.3" y1="524.0" x2="645.5" y2="536.4" stroke="#dfe1e3" stroke-width="1.92"/><circle cx="645.5" cy="536.4" r="7.900" fill="url(#ghb)" stroke="#34383d" stroke-width=".9"/><line x1="690.9" y1="479.2" x2="691.7" y2="466.7" stroke="#1e2124" stroke-width="6"/><line x1="690.9" y1="479.2" x2="691.7" y2="466.7" stroke="#34383d" stroke-width="4.6"/><line x1="690.9" y1="479.2" x2="691.7" y2="466.7" stroke="#50565c" stroke-width="1.92"/><line x1="691.7" y1="466.7" x2="692.5" y2="454.2" stroke="#4a4e53" stroke-width="6"/><line x1="691.7" y1="466.7" x2="692.5" y2="454.2" stroke="#a9adb2" stroke-width="4.6"/><line x1="691.7" y1="466.7" x2="692.5" y2="454.2" stroke="#dfe1e3" stroke-width="1.92"/><circle cx="692.5" cy="454.2" r="7.900" fill="url(#ghb)" stroke="#34383d" stroke-width=".9"/><line x1="738.7" y1="511.5" x2="738.0" y2="524.2" stroke="#1e2124" stroke-width="6"/><line x1="738.7" y1="511.5" x2="738.0" y2="524.2" stroke="#34383d" stroke-width="4.6"/><line x1="738.7" y1="511.5" x2="738.0" y2="524.2" stroke="#50565c" stroke-width="1.92"/><line x1="738.0" y1="524.2" x2="737.2" y2="537.0" stroke="#4a4e53" stroke-width="6"/><line x1="738.0" y1="524.2" x2="737.2" y2="537.0" stroke="#a9adb2" stroke-width="4.6"/><line x1="738.0" y1="524.2" x2="737.2" y2="537.0" stroke="#dfe1e3" stroke-width="1.92"/><circle cx="737.2" cy="537.0" r="7.900" fill="url(#ghb)" stroke="#34383d" stroke-width=".9"/><line x1="786.6" y1="480.6" x2="784.0" y2="468.9" stroke="#1e2124" stroke-width="6"/><line x1="786.6" y1="480.6" x2="784.0" y2="468.9" stroke="#34383d" stroke-width="4.6"/><line x1="786.6" y1="480.6" x2="784.0" y2="468.9" stroke="#50565c" stroke-width="1.92"/><line x1="784.0" y1="468.9" x2="781.4" y2="457.1" stroke="#4a4e53" stroke-width="6"/><line x1="784.0" y1="468.9" x2="781.4" y2="457.1" stroke="#a9adb2" stroke-width="4.6"/><line x1="784.0" y1="468.9" x2="781.4" y2="457.1" stroke="#dfe1e3" stroke-width="1.92"/><circle cx="781.4" cy="457.1" r="7.900" fill="url(#ghb)" stroke="#34383d" stroke-width=".9"/><line x1="834.1" y1="514.1" x2="831.2" y2="525.9" stroke="#1e2124" stroke-width="6"/><line x1="834.1" y1="514.1" x2="831.2" y2="525.9" stroke="#34383d" stroke-width="4.6"/><line x1="834.1" y1="514.1" x2="831.2" y2="525.9" stroke="#50565c" stroke-width="1.92"/><line x1="831.2" y1="525.9" x2="828.4" y2="537.6" stroke="#4a4e53" stroke-width="6"/><line x1="831.2" y1="525.9" x2="828.4" y2="537.6" stroke="#a9adb2" stroke-width="4.6"/><line x1="831.2" y1="525.9" x2="828.4" y2="537.6" stroke="#dfe1e3" stroke-width="1.92"/><circle cx="828.4" cy="537.6" r="7.900" fill="url(#ghb)" stroke="#34383d" stroke-width=".9"/><line x1="882.7" y1="482.0" x2="880.2" y2="470.2" stroke="#1e2124" stroke-width="6"/><line x1="882.7" y1="482.0" x2="880.2" y2="470.2" stroke="#34383d" stroke-width="4.6"/><line x1="882.7" y1="482.0" x2="880.2" y2="470.2" stroke="#50565c" stroke-width="1.92"/><line x1="880.2" y1="470.2" x2="877.7" y2="458.5" stroke="#4a4e53" stroke-width="6"/><line x1="880.2" y1="470.2" x2="877.7" y2="458.5" stroke="#a9adb2" stroke-width="4.6"/><line x1="880.2" y1="470.2" x2="877.7" y2="458.5" stroke="#dfe1e3" stroke-width="1.92"/><circle cx="877.7" cy="458.5" r="7.900" fill="url(#ghb)" stroke="#34383d" stroke-width=".9"/><line x1="930.2" y1="515.5" x2="927.5" y2="527.5" stroke="#1e2124" stroke-width="6"/><line x1="930.2" y1="515.5" x2="927.5" y2="527.5" stroke="#34383d" stroke-width="4.6"/><line x1="930.2" y1="515.5" x2="927.5" y2="527.5" stroke="#50565c" stroke-width="1.92"/><line x1="927.5" y1="527.5" x2="924.8" y2="539.4" stroke="#4a4e53" stroke-width="6"/><line x1="927.5" y1="527.5" x2="924.8" y2="539.4" stroke="#a9adb2" stroke-width="4.6"/><line x1="927.5" y1="527.5" x2="924.8" y2="539.4" stroke="#dfe1e3" stroke-width="1.92"/><circle cx="924.8" cy="539.4" r="7.900" fill="url(#ghb)" stroke="#34383d" stroke-width=".9"/><line x1="499.2" y1="477.7" x2="546.9" y2="510.5" stroke="#1e2124" stroke-width="7"/><line x1="499.2" y1="477.7" x2="546.9" y2="510.5" stroke="#3a3e43" stroke-width="5.6"/><line x1="499.2" y1="477.7" x2="546.9" y2="510.5" stroke="#5a6066" stroke-width="2.24"/><line x1="546.9" y1="510.5" x2="595.3" y2="477.7" stroke="#1e2124" stroke-width="7"/><line x1="546.9" y1="510.5" x2="595.3" y2="477.7" stroke="#3a3e43" stroke-width="5.6"/><line x1="546.9" y1="510.5" x2="595.3" y2="477.7" stroke="#5a6066" stroke-width="2.24"/><line x1="595.3" y1="477.7" x2="643.1" y2="511.5" stroke="#1e2124" stroke-width="7"/><line x1="595.3" y1="477.7" x2="643.1" y2="511.5" stroke="#3a3e43" stroke-width="5.6"/><line x1="595.3" y1="477.7" x2="643.1" y2="511.5" stroke="#5a6066" stroke-width="2.24"/><line x1="643.1" y1="511.5" x2="690.9" y2="479.2" stroke="#1e2124" stroke-width="7"/><line x1="643.1" y1="511.5" x2="690.9" y2="479.2" stroke="#3a3e43" stroke-width="5.6"/><line x1="643.1" y1="511.5" x2="690.9" y2="479.2" stroke="#5a6066" stroke-width="2.24"/><line x1="690.9" y1="479.2" x2="738.7" y2="511.5" stroke="#1e2124" stroke-width="7"/><line x1="690.9" y1="479.2" x2="738.7" y2="511.5" stroke="#3a3e43" stroke-width="5.6"/><line x1="690.9" y1="479.2" x2="738.7" y2="511.5" stroke="#5a6066" stroke-width="2.24"/><line x1="738.7" y1="511.5" x2="786.6" y2="480.6" stroke="#1e2124" stroke-width="7"/><line x1="738.7" y1="511.5" x2="786.6" y2="480.6" stroke="#3a3e43" stroke-width="5.6"/><line x1="738.7" y1="511.5" x2="786.6" y2="480.6" stroke="#5a6066" stroke-width="2.24"/><line x1="786.6" y1="480.6" x2="834.1" y2="514.1" stroke="#1e2124" stroke-width="7"/><line x1="786.6" y1="480.6" x2="834.1" y2="514.1" stroke="#3a3e43" stroke-width="5.6"/><line x1="786.6" y1="480.6" x2="834.1" y2="514.1" stroke="#5a6066" stroke-width="2.24"/><line x1="834.1" y1="514.1" x2="882.7" y2="482.0" stroke="#1e2124" stroke-width="7"/><line x1="834.1" y1="514.1" x2="882.7" y2="482.0" stroke="#3a3e43" stroke-width="5.6"/><line x1="834.1" y1="514.1" x2="882.7" y2="482.0" stroke="#5a6066" stroke-width="2.24"/><line x1="882.7" y1="482.0" x2="930.2" y2="515.5" stroke="#1e2124" stroke-width="7"/><line x1="882.7" y1="482.0" x2="930.2" y2="515.5" stroke="#3a3e43" stroke-width="5.6"/><line x1="882.7" y1="482.0" x2="930.2" y2="515.5" stroke="#5a6066" stroke-width="2.24"/><line x1="499.2" y1="477.7" x2="482.4" y2="489.1" stroke="#1e2124" stroke-width="6.4"/><line x1="499.2" y1="477.7" x2="482.4" y2="489.1" stroke="#34383d" stroke-width="5"/><line x1="499.2" y1="477.7" x2="482.4" y2="489.1" stroke="#50565c" stroke-width="2.048"/><line x1="482.4" y1="489.1" x2="465.7" y2="500.5" stroke="#4a4e53" stroke-width="6.4"/><line x1="482.4" y1="489.1" x2="465.7" y2="500.5" stroke="#b4b8bc" stroke-width="5"/><line x1="482.4" y1="489.1" x2="465.7" y2="500.5" stroke="#f2f3f4" stroke-width="2.048"/><line x1="499.2" y1="477.7" x2="497.4" y2="465.2" stroke="#1e2124" stroke-width="6.4"/><line x1="499.2" y1="477.7" x2="497.4" y2="465.2" stroke="#34383d" stroke-width="5"/><line x1="499.2" y1="477.7" x2="497.4" y2="465.2" stroke="#50565c" stroke-width="2.048"/><line x1="497.4" y1="465.2" x2="495.6" y2="452.8" stroke="#4a4e53" stroke-width="6.4"/><line x1="497.4" y1="465.2" x2="495.6" y2="452.8" stroke="#b4b8bc" stroke-width="5"/><line x1="497.4" y1="465.2" x2="495.6" y2="452.8" stroke="#f2f3f4" stroke-width="2.048"/><line x1="546.9" y1="510.5" x2="545.5" y2="522.8" stroke="#1e2124" stroke-width="6.4"/><line x1="546.9" y1="510.5" x2="545.5" y2="522.8" stroke="#34383d" stroke-width="5"/><line x1="546.9" y1="510.5" x2="545.5" y2="522.8" stroke="#50565c" stroke-width="2.048"/><line x1="545.5" y1="522.8" x2="544.0" y2="535.0" stroke="#4a4e53" stroke-width="6.4"/><line x1="545.5" y1="522.8" x2="544.0" y2="535.0" stroke="#b4b8bc" stroke-width="5"/><line x1="545.5" y1="522.8" x2="544.0" y2="535.0" stroke="#f2f3f4" stroke-width="2.048"/><line x1="595.3" y1="477.7" x2="594.6" y2="465.4" stroke="#1e2124" stroke-width="6.4"/><line x1="595.3" y1="477.7" x2="594.6" y2="465.4" stroke="#34383d" stroke-width="5"/><line x1="595.3" y1="477.7" x2="594.6" y2="465.4" stroke="#50565c" stroke-width="2.048"/><line x1="594.6" y1="465.4" x2="593.9" y2="453.2" stroke="#4a4e53" stroke-width="6.4"/><line x1="594.6" y1="465.4" x2="593.9" y2="453.2" stroke="#b4b8bc" stroke-width="5"/><line x1="594.6" y1="465.4" x2="593.9" y2="453.2" stroke="#f2f3f4" stroke-width="2.048"/><line x1="643.1" y1="511.5" x2="642.4" y2="523.9" stroke="#1e2124" stroke-width="6.4"/><line x1="643.1" y1="511.5" x2="642.4" y2="523.9" stroke="#34383d" stroke-width="5"/><line x1="643.1" y1="511.5" x2="642.4" y2="523.9" stroke="#50565c" stroke-width="2.048"/><line x1="642.4" y1="523.9" x2="641.6" y2="536.2" stroke="#4a4e53" stroke-width="6.4"/><line x1="642.4" y1="523.9" x2="641.6" y2="536.2" stroke="#b4b8bc" stroke-width="5"/><line x1="642.4" y1="523.9" x2="641.6" y2="536.2" stroke="#f2f3f4" stroke-width="2.048"/><line x1="690.9" y1="479.2" x2="691.0" y2="466.4" stroke="#1e2124" stroke-width="6.4"/><line x1="690.9" y1="479.2" x2="691.0" y2="466.4" stroke="#34383d" stroke-width="5"/><line x1="690.9" y1="479.2" x2="691.0" y2="466.4" stroke="#50565c" stroke-width="2.048"/><line x1="691.0" y1="466.4" x2="691.2" y2="453.5" stroke="#4a4e53" stroke-width="6.4"/><line x1="691.0" y1="466.4" x2="691.2" y2="453.5" stroke="#b4b8bc" stroke-width="5"/><line x1="691.0" y1="466.4" x2="691.2" y2="453.5" stroke="#f2f3f4" stroke-width="2.048"/><line x1="738.7" y1="511.5" x2="738.7" y2="524.5" stroke="#1e2124" stroke-width="6.4"/><line x1="738.7" y1="511.5" x2="738.7" y2="524.5" stroke="#34383d" stroke-width="5"/><line x1="738.7" y1="511.5" x2="738.7" y2="524.5" stroke="#50565c" stroke-width="2.048"/><line x1="738.7" y1="524.5" x2="738.7" y2="537.6" stroke="#4a4e53" stroke-width="6.4"/><line x1="738.7" y1="524.5" x2="738.7" y2="537.6" stroke="#b4b8bc" stroke-width="5"/><line x1="738.7" y1="524.5" x2="738.7" y2="537.6" stroke="#f2f3f4" stroke-width="2.048"/><line x1="786.6" y1="480.6" x2="787.8" y2="468.1" stroke="#1e2124" stroke-width="6.4"/><line x1="786.6" y1="480.6" x2="787.8" y2="468.1" stroke="#34383d" stroke-width="5"/><line x1="786.6" y1="480.6" x2="787.8" y2="468.1" stroke="#50565c" stroke-width="2.048"/><line x1="787.8" y1="468.1" x2="788.9" y2="455.6" stroke="#4a4e53" stroke-width="6.4"/><line x1="787.8" y1="468.1" x2="788.9" y2="455.6" stroke="#b4b8bc" stroke-width="5"/><line x1="787.8" y1="468.1" x2="788.9" y2="455.6" stroke="#f2f3f4" stroke-width="2.048"/><line x1="834.1" y1="514.1" x2="835.0" y2="526.5" stroke="#1e2124" stroke-width="6.4"/><line x1="834.1" y1="514.1" x2="835.0" y2="526.5" stroke="#34383d" stroke-width="5"/><line x1="834.1" y1="514.1" x2="835.0" y2="526.5" stroke="#50565c" stroke-width="2.048"/><line x1="835.0" y1="526.5" x2="835.8" y2="539.0" stroke="#4a4e53" stroke-width="6.4"/><line x1="835.0" y1="526.5" x2="835.8" y2="539.0" stroke="#b4b8bc" stroke-width="5"/><line x1="835.0" y1="526.5" x2="835.8" y2="539.0" stroke="#f2f3f4" stroke-width="2.048"/><line x1="882.7" y1="482.0" x2="884.1" y2="469.4" stroke="#1e2124" stroke-width="6.4"/><line x1="882.7" y1="482.0" x2="884.1" y2="469.4" stroke="#34383d" stroke-width="5"/><line x1="882.7" y1="482.0" x2="884.1" y2="469.4" stroke="#50565c" stroke-width="2.048"/><line x1="884.1" y1="469.4" x2="885.5" y2="456.8" stroke="#4a4e53" stroke-width="6.4"/><line x1="884.1" y1="469.4" x2="885.5" y2="456.8" stroke="#b4b8bc" stroke-width="5"/><line x1="884.1" y1="469.4" x2="885.5" y2="456.8" stroke="#f2f3f4" stroke-width="2.048"/><line x1="930.2" y1="515.5" x2="932.0" y2="527.6" stroke="#1e2124" stroke-width="6.4"/><line x1="930.2" y1="515.5" x2="932.0" y2="527.6" stroke="#34383d" stroke-width="5"/><line x1="930.2" y1="515.5" x2="932.0" y2="527.6" stroke="#50565c" stroke-width="2.048"/><line x1="932.0" y1="527.6" x2="933.8" y2="539.7" stroke="#4a4e53" stroke-width="6.4"/><line x1="932.0" y1="527.6" x2="933.8" y2="539.7" stroke="#b4b8bc" stroke-width="5"/><line x1="932.0" y1="527.6" x2="933.8" y2="539.7" stroke="#f2f3f4" stroke-width="2.048"/><line x1="930.2" y1="515.5" x2="947.1" y2="504.1" stroke="#1e2124" stroke-width="6.4"/><line x1="930.2" y1="515.5" x2="947.1" y2="504.1" stroke="#34383d" stroke-width="5"/><line x1="930.2" y1="515.5" x2="947.1" y2="504.1" stroke="#50565c" stroke-width="2.048"/><line x1="947.1" y1="504.1" x2="964.0" y2="492.7" stroke="#4a4e53" stroke-width="6.4"/><line x1="947.1" y1="504.1" x2="964.0" y2="492.7" stroke="#b4b8bc" stroke-width="5"/><line x1="947.1" y1="504.1" x2="964.0" y2="492.7" stroke="#f2f3f4" stroke-width="2.048"/><circle cx="499.2" cy="477.7" r="12" fill="url(#gc)" stroke="#1c1f22" stroke-width=".8"/><circle cx="546.9" cy="510.5" r="12" fill="url(#gc)" stroke="#1c1f22" stroke-width=".8"/><circle cx="595.3" cy="477.7" r="12" fill="url(#gc)" stroke="#1c1f22" stroke-width=".8"/><circle cx="643.1" cy="511.5" r="12" fill="url(#gc)" stroke="#1c1f22" stroke-width=".8"/><circle cx="690.9" cy="479.2" r="12" fill="url(#gc)" stroke="#1c1f22" stroke-width=".8"/><circle cx="738.7" cy="511.5" r="12" fill="url(#gc)" stroke="#1c1f22" stroke-width=".8"/><circle cx="786.6" cy="480.6" r="12" fill="url(#gc)" stroke="#1c1f22" stroke-width=".8"/><circle cx="834.1" cy="514.1" r="12" fill="url(#gc)" stroke="#1c1f22" stroke-width=".8"/><circle cx="882.7" cy="482.0" r="12" fill="url(#gc)" stroke="#1c1f22" stroke-width=".8"/><circle cx="930.2" cy="515.5" r="12" fill="url(#gc)" stroke="#1c1f22" stroke-width=".8"/><line x1="493.4" y1="481.6" x2="489.3" y2="484.5" stroke="#56616b" stroke-width="5" opacity=".55"/><line x1="492.6" y1="482.2" x2="489.3" y2="484.5" stroke="#78838d" stroke-width="1.600" opacity=".5"/><line x1="498.2" y1="470.8" x2="497.5" y2="465.8" stroke="#56616b" stroke-width="5" opacity=".55"/><line x1="498.1" y1="469.8" x2="497.5" y2="465.8" stroke="#78838d" stroke-width="1.600" opacity=".5"/><line x1="546.1" y1="517.5" x2="545.5" y2="522.4" stroke="#56616b" stroke-width="5" opacity=".55"/><line x1="546.0" y1="518.4" x2="545.5" y2="522.4" stroke="#78838d" stroke-width="1.600" opacity=".5"/><line x1="594.9" y1="470.7" x2="594.6" y2="465.7" stroke="#56616b" stroke-width="5" opacity=".55"/><line x1="594.8" y1="469.7" x2="594.6" y2="465.7" stroke="#78838d" stroke-width="1.600" opacity=".5"/><line x1="642.7" y1="518.5" x2="642.4" y2="523.5" stroke="#56616b" stroke-width="5" opacity=".55"/><line x1="642.6" y1="519.5" x2="642.4" y2="523.5" stroke="#78838d" stroke-width="1.600" opacity=".5"/><line x1="691.0" y1="472.2" x2="691.0" y2="467.2" stroke="#56616b" stroke-width="5" opacity=".55"/><line x1="691.0" y1="471.2" x2="691.0" y2="467.2" stroke="#78838d" stroke-width="1.600" opacity=".5"/><line x1="738.7" y1="518.5" x2="738.7" y2="523.5" stroke="#56616b" stroke-width="5" opacity=".55"/><line x1="738.7" y1="519.5" x2="738.7" y2="523.5" stroke="#78838d" stroke-width="1.600" opacity=".5"/><line x1="787.2" y1="473.6" x2="787.7" y2="468.7" stroke="#56616b" stroke-width="5" opacity=".55"/><line x1="787.3" y1="472.6" x2="787.7" y2="468.7" stroke="#78838d" stroke-width="1.600" opacity=".5"/><line x1="834.6" y1="521.1" x2="834.9" y2="526.1" stroke="#56616b" stroke-width="5" opacity=".55"/><line x1="834.6" y1="522.1" x2="834.9" y2="526.1" stroke="#78838d" stroke-width="1.600" opacity=".5"/><line x1="883.5" y1="475.0" x2="884.0" y2="470.1" stroke="#56616b" stroke-width="5" opacity=".55"/><line x1="883.6" y1="474.0" x2="884.0" y2="470.1" stroke="#78838d" stroke-width="1.600" opacity=".5"/><line x1="931.2" y1="522.4" x2="932.0" y2="527.4" stroke="#56616b" stroke-width="5" opacity=".55"/><line x1="931.4" y1="523.4" x2="932.0" y2="527.4" stroke="#78838d" stroke-width="1.600" opacity=".5"/><line x1="936.0" y1="511.6" x2="940.1" y2="508.8" stroke="#56616b" stroke-width="5" opacity=".55"/><line x1="936.8" y1="511.0" x2="940.1" y2="508.8" stroke="#78838d" stroke-width="1.600" opacity=".5"/><circle cx="465.7" cy="500.5" r="8.300" fill="url(#gh)" stroke="#3b3f44" stroke-width=".9"/><circle cx="495.6" cy="452.8" r="8.300" fill="url(#gh)" stroke="#3b3f44" stroke-width=".9"/><circle cx="544.0" cy="535.0" r="8.300" fill="url(#gh)" stroke="#3b3f44" stroke-width=".9"/><circle cx="593.9" cy="453.2" r="8.300" fill="url(#gh)" stroke="#3b3f44" stroke-width=".9"/><circle cx="641.6" cy="536.2" r="8.300" fill="url(#gh)" stroke="#3b3f44" stroke-width=".9"/><circle cx="691.2" cy="453.5" r="8.300" fill="url(#gh)" stroke="#3b3f44" stroke-width=".9"/><circle cx="738.7" cy="537.6" r="8.300" fill="url(#gh)" stroke="#3b3f44" stroke-width=".9"/><circle cx="788.9" cy="455.6" r="8.300" fill="url(#gh)" stroke="#3b3f44" stroke-width=".9"/><circle cx="835.8" cy="539.0" r="8.300" fill="url(#gh)" stroke="#3b3f44" stroke-width=".9"/><circle cx="885.5" cy="456.8" r="8.300" fill="url(#gh)" stroke="#3b3f44" stroke-width=".9"/><circle cx="933.8" cy="539.7" r="8.300" fill="url(#gh)" stroke="#3b3f44" stroke-width=".9"/><circle cx="964.0" cy="492.7" r="8.300" fill="url(#gh)" stroke="#3b3f44" stroke-width=".9"/><polygon points="412.700,693 420.700,707 404.700,707" fill="#6b98ca"/><polygon points="412.700,881 420.700,867.700 404.700,867.700" fill="#6b98ca"/><polygon points="319.300,787.300 332.600,779.300 332.600,795.400" fill="#6b98ca"/><polygon points="505.800,787.300 492.800,779.300 492.800,795.400" fill="#6b98ca"/><path d="M391 703.500Q370 708 357 720" fill="none" stroke="#6b98ca" stroke-width="5.500"/><polygon points="347.500,727 353,711 365,724.500" fill="#6b98ca"/><path d="M434.500 703.500Q455.500 708 468.500 720" fill="none" stroke="#6b98ca" stroke-width="5.500"/><polygon points="478,727 472.500,711 460.500,724.500" fill="#6b98ca"/><rect x="410.800" y="730" width="4.200" height="15" fill="#3dab47"/><polygon points="412.900,718.500 418.800,731.500 407,731.500" fill="#3dab47"/><polygon points="387.8,745.1 440.8,745.7 451.7,752.3 456.1,763.8 456.1,809.8 450.5,819.0 437.9,830.3 387.2,830.8 374.0,822.5 368.8,813.3 368.6,763.8 373.4,754.6" fill="#6f9bcd" opacity=".55"/><polygon points="387.8,745.1 440.8,745.7 435.6,750.2 382.6,750.7" fill="#5d8bc0" /><polygon points="383.8,823.6 434.4,824.2 437.9,830.1 387.2,830.7" fill="#5b89bd" /><polygon points="370.0,762.6 376.9,773.0 376.9,808.7 369.0,814.4 368.4,788.0" fill="#4e7aab" /><polygon points="451.5,759.7 456.1,765.2 456.3,808.7 451.5,814.7 448.8,809.8 448.8,765.2" fill="#4a76a6" /><polygon points="372.3,756.9 389.5,754.3 388.6,761.2 374.8,773.2 371.1,769.5" fill="#7fb0e8" /><polygon points="426.4,754.8 447.1,753.6 451.7,758.0 450.8,765.2 442.7,773.7" fill="#5182b8" /><polygon points="372.0,808.9 390.9,823.9 388.6,827.8 374.3,821.6" fill="#4673a5" /><polygon points="425.8,826.2 444.3,808.7 447.3,818.1 440.4,828.5" fill="#4673a5" /><polygon points="398.7,752.3 434.4,752.3 447.1,769.5 447.1,808.7 428.7,822.5 389.5,822.5 377.4,809.8 377.4,771.8" fill="#9cc3ee" opacity=".5"/><polygon points="399.3,755.7 425.2,755.7 443.6,773.0 443.6,804.1 425.8,820.2 389.5,820.2 379.7,808.7 379.7,773.0" fill="#6a95c7" /><polygon points="399.3,788.5 401.6,788.2 404.7,791.2 406.8,790.3 408.9,794.9 407.4,796.6 410.9,800.6 409.1,800.8 403.3,795.8" fill="#3f80d4" /><rect x="456" y="785.200" width="14" height="4.400" fill="#ef7a42"/><polygon points="483,787.400 469,780.700 469,794" fill="#ef7a42"/><rect x="853.500" y="836.300" width="190" height="3.200" rx="1.200" fill="#fff" stroke="#6b7480" stroke-width=".9"/></g></svg>
<span class="t " style="left:934.5px;top:801.7px;font-size:19px;color:#fff;letter-spacing:0.21px;font-weight:bold;-webkit-text-stroke:1.800px #59626c;">5 Å</span>
<span class="t " style="left:934.5px;top:801.7px;font-size:19px;color:#fff;letter-spacing:0.21px;font-weight:bold;">5 Å</span>
<div class="b" style="left:319px;top:158px;width:158px;height:32px;background:#304056;border-radius:4px;"></div>
<div class="b" style="left:319px;top:158px;width:76px;height:32px;background:#455d7e;border-radius:4px 0 0 4px;"></div>
<svg class="b" style="left:325px;top:163px;" width="24" height="24" viewBox="0 0 24 24"><polygon points="2.80,8.50 2.80,22.02 6.03,19.08 8.58,24.38 11.03,23.30 8.58,18.20 13.19,18.20" fill="#e8f0fa" stroke="#2a3546" stroke-width=".8" stroke-linejoin="round" transform="rotate(-14 2.8 8.5)"/><g stroke="#1f2a3a" stroke-width="2.600" opacity=".6"><path d="M16 3.5v10M11 8.5h10"/></g><g stroke="#fff" stroke-width="1.100"><path d="M16 4.5v8M12 8.5h8"/></g><polygon points="16,2.9 14,5.4 18,5.4" fill="#fff"/><polygon points="16,14.1 14,11.6 18,11.6" fill="#fff"/><polygon points="10.4,8.5 12.9,6.5 12.9,10.5" fill="#fff"/><polygon points="21.6,8.5 19.1,6.5 19.1,10.5" fill="#fff"/></svg>
<span class="t " style="left:354.5px;top:167px;font-size:12px;color:#fff;letter-spacing:0.21px;font-weight:bold;">Move</span>
<svg class="b" style="left:398px;top:160px;" width="27" height="27" viewBox="0 0 27 27"><g stroke="#10151c" stroke-width="3" opacity=".4"><path d="M7.400 3v22M13.200 3v22M19 3v22M2 7.800h22.400M2 14.200h22.400M2 20h22.400"/></g><g stroke="#ccd9ea" stroke-width="1.300"><path d="M7.400 3v22M13.200 3v22M19 3v22M2 7.800h22.400M2 14.200h22.400M2 20h22.400"/></g><g transform="translate(7.800,8.200) rotate(-135)"><path d="M-3.600 4.500v-4.500a3.600 3.600 0 0 1 7.200 0v4.500" fill="none" stroke="#1b2431" stroke-width="4"/><path d="M-3.600 4.500v-4.500a3.600 3.600 0 0 1 7.200 0v4.500" fill="none" stroke="#a8c8ee" stroke-width="2.600"/><path d="M-3.600 4.500v-1.800M3.600 4.500v-1.800" stroke="#f2f6fb" stroke-width="2.600"/></g></svg>
<span class="t " style="left:426.75px;top:167px;font-size:12px;color:#fff;letter-spacing:0.15px;">Off</span>
<svg class="b" style="left:467.5px;top:181px;" width="6" height="4" viewBox="0 0 6 4"><polygon points="0,0 6,0 3,3.500" fill="#fff"/></svg>
<div class="b" style="left:319px;top:196px;width:32px;height:403px;background:#304056;border-radius:4px;"></div>
<div class="b" style="left:319px;top:351px;width:32px;height:31px;background:#4a617f;"></div>
<svg class="b" style="left:319px;top:196px;" width="32" height="403" viewBox="0 0 32 403"><defs>
<radialGradient id="bl" cx=".38" cy=".32" r=".75"><stop offset="0" stop-color="#f6faff"/><stop offset=".55" stop-color="#b9d3f1"/><stop offset="1" stop-color="#7fa4d2"/></radialGradient>
<radialGradient id="gc" cx=".4" cy=".3" r=".74"><stop offset="0" stop-color="#989ea3"/><stop offset=".14" stop-color="#6d7378"/><stop offset=".4" stop-color="#4b5055"/><stop offset=".75" stop-color="#3c4045"/><stop offset="1" stop-color="#25282b"/></radialGradient>
<radialGradient id="gh" cx=".4" cy=".36" r=".72"><stop offset="0" stop-color="#ffffff"/><stop offset=".18" stop-color="#f3f4f5"/><stop offset=".45" stop-color="#d3d6d9"/><stop offset=".72" stop-color="#a6aaae"/><stop offset="1" stop-color="#54585d"/></radialGradient>
<radialGradient id="ghb" cx=".42" cy=".38" r=".7"><stop offset="0" stop-color="#e8eaeb"/><stop offset=".45" stop-color="#c0c3c6"/><stop offset=".8" stop-color="#8a8e93"/><stop offset="1" stop-color="#505459"/></radialGradient>
<linearGradient id="vg" x1="0" y1="0" x2="0" y2="1"><stop offset="0" stop-color="#54687e"/><stop offset=".5" stop-color="#7490af"/><stop offset="1" stop-color="#9bbee5"/></linearGradient>
</defs><g transform="translate(-319,-196)"><polygon points="335.00,201.50 337.42,207.97 344.32,208.27 338.91,212.57 340.76,219.23 335.00,215.42 329.24,219.23 331.09,212.57 325.68,208.27 332.58,207.97" fill="#eed92f" stroke="#a8981c" stroke-width=".6" stroke-linejoin="round"/><polygon points="342,219 347,219 344.500,222" fill="#fff"/><rect x="324.800" y="231.700" width="12.200" height="10" fill="#a8c8ee" stroke="#1f2a3a" stroke-width=".6"/><rect x="325.800" y="232.700" width="10.200" height="2.500" fill="#8bb0dc"/><polygon points="337.60,242.30 337.60,254.03 340.41,251.48 342.62,256.07 344.74,255.14 342.62,250.72 346.61,250.72" fill="#e8f0fa" stroke="#2a3546" stroke-width=".8" stroke-linejoin="round" transform="rotate(-14 337.6 242.3)"/><g stroke="#cfe0f4" stroke-width="1.500"><line x1="329" y1="278" x2="334" y2="269.400"/><line x1="334" y1="269.400" x2="326" y2="265.600"/><line x1="334" y1="269.400" x2="342.300" y2="264"/></g><circle cx="326" cy="265.6" r="2.8" fill="url(#bl)" stroke="#5c7da6" stroke-width=".5"/><circle cx="342.3" cy="264" r="2.8" fill="url(#bl)" stroke="#5c7da6" stroke-width=".5"/><circle cx="334" cy="269.4" r="3.4" fill="url(#bl)" stroke="#5c7da6" stroke-width=".5"/><circle cx="329" cy="278" r="5" fill="url(#bl)" stroke="#5c7da6" stroke-width=".5"/><path d="M340.600 273.500h2.600v3.700h3.700v2.600h-3.700v3.700h-2.600v-3.700h-3.700v-2.600h3.700z" fill="#fff" stroke="#1a222e" stroke-width=".8" paint-order="stroke"/><line x1="326.8" y1="314" x2="331.8" y2="297" stroke="#1f2a3a" stroke-width="6" stroke-linecap="round" opacity=".55"/><line x1="326.8" y1="314" x2="331.8" y2="297" stroke="#a8c8ee" stroke-width="4.200" stroke-linecap="round"/><line x1="326.8" y1="314" x2="328.1" y2="309.500" stroke="#5f6b7a" stroke-width="4.600" stroke-linecap="round"/><line x1="337.8" y1="314" x2="342.8" y2="297" stroke="#1f2a3a" stroke-width="6" stroke-linecap="round" opacity=".55"/><line x1="337.8" y1="314" x2="342.8" y2="297" stroke="#a8c8ee" stroke-width="4.200" stroke-linecap="round"/><line x1="337.8" y1="314" x2="339.1" y2="309.500" stroke="#5f6b7a" stroke-width="4.600" stroke-linecap="round"/><line x1="338.600" y1="311" x2="342.300" y2="298" stroke="#304056" stroke-width="1"/><circle cx="329" cy="341.4" r="5.2" fill="url(#bl)" stroke="#5c7da6" stroke-width=".5"/><polygon points="324.80,363.00 324.80,377.49 328.26,374.34 331.00,380.01 333.62,378.86 331.00,373.39 335.93,373.39" fill="#e8f0fa" stroke="#2a3546" stroke-width=".8" stroke-linejoin="round" transform="rotate(-14 324.8 363)"/><g stroke="#1f2a3a" stroke-width="2.600" opacity=".6"><path d="M339.8 359v10M334.8 364h10"/></g><g stroke="#fff" stroke-width="1.100"><path d="M339.8 360v8M335.8 364h8"/></g><polygon points="339.8,358.4 337.8,360.9 341.8,360.9" fill="#fff"/><polygon points="339.8,369.6 337.8,367.1 341.8,367.1" fill="#fff"/><polygon points="334.2,364 336.7,362 336.7,366" fill="#fff"/><polygon points="345.4,364 342.9,362 342.9,366" fill="#fff"/><circle cx="335" cy="398.4" r="9.6" fill="none" stroke="#1b2431" stroke-width="2.600" opacity=".5"/><circle cx="335" cy="398.4" r="9.6" fill="none" stroke="#a8c8ee" stroke-width="1.300"/><circle cx="335" cy="398.4" r="5.952" fill="none" stroke="#a8c8ee" stroke-width="1"/><line x1="335" y1="398.4" x2="335.00" y2="390.53" stroke="#a8c8ee" stroke-width="2.200"/><line x1="335" y1="398.4" x2="341.82" y2="402.34" stroke="#a8c8ee" stroke-width="2.200"/><line x1="335" y1="398.4" x2="328.18" y2="402.34" stroke="#a8c8ee" stroke-width="2.200"/><circle cx="335" cy="429.2" r="9.6" fill="none" stroke="#1b2431" stroke-width="2.600" opacity=".5"/><circle cx="335" cy="429.2" r="9.6" fill="none" stroke="#a8c8ee" stroke-width="1.300"/><circle cx="335" cy="429.2" r="5.952" fill="none" stroke="#a8c8ee" stroke-width="1"/><line x1="335" y1="429.2" x2="335.00" y2="421.33" stroke="#a8c8ee" stroke-width="2.200"/><line x1="335" y1="429.2" x2="341.82" y2="433.14" stroke="#a8c8ee" stroke-width="2.200"/><line x1="335" y1="429.2" x2="328.18" y2="433.14" stroke="#a8c8ee" stroke-width="2.200"/><g fill="none" stroke="#1b2431" stroke-width="4.400" opacity=".45" stroke-linecap="round"><path d="M325.500 455c4 0 5.500 9 9.500 9s5.500-9 9.500-9M325.500 464c4 0 5.500-9 9.500-9s5.500 9 9.500 9"/></g><g fill="none" stroke="#cfe0f4" stroke-width="2.500" stroke-linecap="round"><path d="M325.500 455c4 0 5.500 9 9.500 9s5.500-9 9.500-9M325.500 464c4 0 5.500-9 9.500-9s5.500 9 9.500 9"/></g><g transform="rotate(-35 334.500 490)"><rect x="325.500" y="485.500" width="18" height="9" rx="1.500" fill="#f3f6fa" stroke="#1f2a3a" stroke-width=".8"/><rect x="325.500" y="485.500" width="6" height="9" rx="1.500" fill="#a8c8ee" stroke="#1f2a3a" stroke-width=".6"/></g><rect x="333" y="497.300" width="11.500" height="1.600" fill="#10151c"/><rect x="325" y="513" width="20" height="16" rx="1" fill="#a8c8ee" stroke="#1b2431" stroke-width=".8"/><rect x="327" y="515" width="16" height="12" fill="#fff" stroke="#1b2431" stroke-width=".8"/><rect x="325" y="543.500" width="20" height="17" rx="1" fill="#7faee3" stroke="#1b2431" stroke-width=".6"/><g stroke="#dbe9f8" stroke-width="1.300"><path d="M328 544v7M331.300 544v5M334.600 544v7M337.900 544v5M341.200 544v7"/></g><circle cx="328.500" cy="579" r="1.800" fill="#e6edf6"/><circle cx="335" cy="579" r="1.800" fill="#e6edf6"/><circle cx="341.500" cy="579" r="1.800" fill="#e6edf6"/><polygon points="342,590 347,590 344.500,593" fill="#fff"/></g></svg>
<span class="t " style="left:331.2px;top:320.8px;font-size:13px;color:#fff;letter-spacing:-0.01px;">2+</span>
<span class="t " style="left:321.5px;top:409.5px;font-size:5.5px;color:#dfe8f3;letter-spacing:0.10px;font-weight:bold;">XYZ</span>
<span class="t " style="left:328.5px;top:514.5px;font-size:10px;color:#000;letter-spacing:0.11px;font-weight:bold;">Aa</span>
<div class="b" style="left:715px;top:158px;width:372px;height:32px;background:#304056;border-radius:4px;"></div>
<span class="t " style="left:720px;top:167px;font-size:12px;color:#fff;letter-spacing:-0.02px;">Selection filter</span>
<div class="b" style="left:806px;top:163px;width:214px;height:22px;background:#fff;"></div>
<svg class="b" style="left:810px;top:166px;" width="17" height="17" viewBox="0 0 17 17"><defs>
<radialGradient id="bl" cx=".38" cy=".32" r=".75"><stop offset="0" stop-color="#f6faff"/><stop offset=".55" stop-color="#b9d3f1"/><stop offset="1" stop-color="#7fa4d2"/></radialGradient>
<radialGradient id="gc" cx=".4" cy=".3" r=".74"><stop offset="0" stop-color="#989ea3"/><stop offset=".14" stop-color="#6d7378"/><stop offset=".4" stop-color="#4b5055"/><stop offset=".75" stop-color="#3c4045"/><stop offset="1" stop-color="#25282b"/></radialGradient>
<radialGradient id="gh" cx=".4" cy=".36" r=".72"><stop offset="0" stop-color="#ffffff"/><stop offset=".18" stop-color="#f3f4f5"/><stop offset=".45" stop-color="#d3d6d9"/><stop offset=".72" stop-color="#a6aaae"/><stop offset="1" stop-color="#54585d"/></radialGradient>
<radialGradient id="ghb" cx=".42" cy=".38" r=".7"><stop offset="0" stop-color="#e8eaeb"/><stop offset=".45" stop-color="#c0c3c6"/><stop offset=".8" stop-color="#8a8e93"/><stop offset="1" stop-color="#505459"/></radialGradient>
<linearGradient id="vg" x1="0" y1="0" x2="0" y2="1"><stop offset="0" stop-color="#54687e"/><stop offset=".5" stop-color="#7490af"/><stop offset="1" stop-color="#9bbee5"/></linearGradient>
</defs><circle cx="5.5" cy="5" r="3.8" fill="url(#bl)" stroke="#5c7da6" stroke-width=".5"/><circle cx="11" cy="8.5" r="4.2" fill="url(#bl)" stroke="#5c7da6" stroke-width=".5"/><circle cx="5.5" cy="12" r="3.8" fill="url(#bl)" stroke="#5c7da6" stroke-width=".5"/></svg>
<span class="t " style="left:830px;top:167px;font-size:12px;color:#000;letter-spacing:0.04px;">Any node</span>
<svg class="b" style="left:996px;top:170.5px;" width="12" height="9" viewBox="0 0 12 9"><polygon points="0,0 12,0 6,9" fill="#3f6fae"/></svg>
<svg class="b" style="left:1028px;top:162px;" width="24" height="24" viewBox="0 0 30 30"><g fill="none" stroke="#a8c8ee" stroke-width="1.500" stroke-linejoin="round"><path d="M1 11.500v-10.500h11"/><path d="M18 1h11v10.500"/><path d="M1 18.500v10.500h11"/><path d="M18 29h11v-10.500"/></g>
<defs><radialGradient id="sg1028" cx=".4" cy=".3" r=".7"><stop offset="0" stop-color="#f4f9ff"/><stop offset=".6" stop-color="#b5d0f0"/><stop offset="1" stop-color="#7da3d0"/></radialGradient></defs>
<circle cx="11" cy="10" r="5" fill="url(#sg1028)"/><circle cx="20.500" cy="15" r="5" fill="url(#sg1028)"/><circle cx="11" cy="21" r="5" fill="url(#sg1028)"/></svg>
<svg class="b" style="left:1059px;top:162px;" width="24" height="24" viewBox="0 0 24 24"><g fill="none" stroke="#587392" stroke-width="1.200" stroke-linejoin="round"><path d="M1 9.500v-8.500h9"/><path d="M14.500 1h8.500v8.500"/><path d="M1 14.500v8.500h9"/><path d="M14.500 23h8.500v-8.500"/></g><g stroke="#9ba3ad" stroke-width="3" stroke-linecap="round"><path d="M8.300 8.300l7.400 7.400M15.700 8.300l-7.400 7.400"/></g></svg>
<div class="b" style="left:1055px;top:196px;width:32px;height:128px;background:#304056;border-radius:4px;"></div>
<svg class="b" style="left:1055px;top:196px;" width="32" height="128" viewBox="0 0 32 128"><g transform="translate(-1055,-196)"><g fill="none" stroke="#dce6f2" stroke-width="1.700" stroke-dasharray="1.600 1.100"><path d="M1060.8 212.5q3-1.500 0 -3.300q-3-1.700 0-3.300q3-1.700 0-3.300"/><path d="M1067 201.5q2.500 0 4 2.500t4.500 7"/></g><path d="M1071.500 218l3.300 3.300 7-8.300" fill="none" stroke="#fff" stroke-width="1.800"/><g fill="none" stroke="#dce6f2" stroke-width="1.700" stroke-dasharray="1.600 1.100"><path d="M1060.8 245q3-1.500 0 -3.300q-3-1.700 0-3.300q3-1.700 0-3.300"/><path d="M1067 234q2.500 0 4 2.500t4.500 7"/></g><path d="M1072 249v4.500h10.500v-4.500" fill="none" stroke="#fff" stroke-width="1.800"/><path d="M1077.200 242.500v7M1074 246.500l3.200 3.200 3.200-3.200" fill="none" stroke="#fff" stroke-width="1.800"/><rect x="1059.500" y="265.500" width="23" height="21" fill="#5d7696" stroke="#1b2431" stroke-width=".6"/><rect x="1059.500" y="265.500" width="23" height="2.600" fill="#a8c8ee"/><rect x="1059.500" y="283.800" width="23" height="2.600" fill="#a8c8ee"/><line x1="1073.500" y1="310" x2="1081" y2="319.500" stroke="#1b2431" stroke-width="4.200"/><line x1="1073.500" y1="310" x2="1081" y2="319.500" stroke="#a8c8ee" stroke-width="2.800"/><line x1="1073.500" y1="310" x2="1075.500" y2="312.500" stroke="#fff" stroke-width="2.800"/><path d="M1070 312.2Q1070 316 1073.8 316Q1070 316 1070 319.8Q1070 316 1066.2 316Q1070 316 1070 312.2z" fill="#f2dd3a"/><path d="M1065 309.5Q1065 311.5 1067 311.5Q1065 311.5 1065 313.5Q1065 311.5 1063 311.5Q1065 311.5 1065 309.5z" fill="#f2dd3a"/><path d="M1064.5 317Q1064.5 319 1066.5 319Q1064.5 319 1064.5 321Q1064.5 319 1062.5 319Q1064.5 319 1064.5 317z" fill="#f2dd3a"/><path d="M1080.5 309.5Q1080.5 311.5 1082.5 311.5Q1080.5 311.5 1080.5 313.5Q1080.5 311.5 1078.5 311.5Q1080.5 311.5 1080.5 309.5z" fill="#f2dd3a"/></g></svg>
<span class="t " style="left:1059.5px;top:294.8px;font-size:13px;color:#fff;letter-spacing:-0.10px;font-weight:bold;">Gro</span>
<span class="t " style="left:1059.8px;top:268.5px;font-size:11px;color:#e8eef6;letter-spacing:0.65px;font-family:'Liberation Mono',monospace;">IP</span>
<span class="t " style="left:1072.5px;top:269.5px;font-size:6px;color:#c5d3e4;letter-spacing:0.37px;font-family:'Liberation Mono',monospace;">[y]:</span>
<div class="b" style="left:455px;top:849px;width:496px;height:32px;background:#304056;border-radius:4px;"></div>
<div class="b" style="left:609.5px;top:849px;width:31px;height:32px;background:#4a617f;"></div>
<div class="b" style="left:671.5px;top:849px;width:31px;height:32px;background:#4a617f;"></div>
<svg class="b" style="left:455px;top:849px;" width="496" height="32" viewBox="0 0 496 32"><defs>
<radialGradient id="bl" cx=".38" cy=".32" r=".75"><stop offset="0" stop-color="#f6faff"/><stop offset=".55" stop-color="#b9d3f1"/><stop offset="1" stop-color="#7fa4d2"/></radialGradient>
<radialGradient id="gc" cx=".4" cy=".3" r=".74"><stop offset="0" stop-color="#989ea3"/><stop offset=".14" stop-color="#6d7378"/><stop offset=".4" stop-color="#4b5055"/><stop offset=".75" stop-color="#3c4045"/><stop offset="1" stop-color="#25282b"/></radialGradient>
<radialGradient id="gh" cx=".4" cy=".36" r=".72"><stop offset="0" stop-color="#ffffff"/><stop offset=".18" stop-color="#f3f4f5"/><stop offset=".45" stop-color="#d3d6d9"/><stop offset=".72" stop-color="#a6aaae"/><stop offset="1" stop-color="#54585d"/></radialGradient>
<radialGradient id="ghb" cx=".42" cy=".38" r=".7"><stop offset="0" stop-color="#e8eaeb"/><stop offset=".45" stop-color="#c0c3c6"/><stop offset=".8" stop-color="#8a8e93"/><stop offset="1" stop-color="#505459"/></radialGradient>
<linearGradient id="vg" x1="0" y1="0" x2="0" y2="1"><stop offset="0" stop-color="#54687e"/><stop offset=".5" stop-color="#7490af"/><stop offset="1" stop-color="#9bbee5"/></linearGradient>
</defs><g transform="translate(-455,-849)"><rect x="458.600" y="853.200" width="23" height="23" fill="none" stroke="#86b1e2" stroke-width="1.300"/><line x1="471.5" y1="867.5" x2="476.5" y2="872.5" stroke="#7d838b" stroke-width="3.400" stroke-linecap="round"/><line x1="471.5" y1="867.5" x2="476.5" y2="872.5" stroke="#e4e8ed" stroke-width="1.700" stroke-linecap="round"/><circle cx="467.5" cy="863.5" r="5.600" fill="#a9c8ee" stroke="#d9dde2" stroke-width="1.500"/><g fill="none" stroke="#a8c8ee" stroke-width="1.300"><path d="M489.500 860v-6.500h6M506 853.500h6v6.500M489.500 870v6.500h6M506 876.500h6v-6.500"/></g><line x1="503" y1="867.5" x2="508" y2="872.5" stroke="#7d838b" stroke-width="3.400" stroke-linecap="round"/><line x1="503" y1="867.5" x2="508" y2="872.5" stroke="#e4e8ed" stroke-width="1.700" stroke-linecap="round"/><circle cx="499" cy="863.5" r="5.600" fill="#a9c8ee" stroke="#d9dde2" stroke-width="1.500"/><line x1="534.5" y1="867.5" x2="539.5" y2="872.5" stroke="#7d838b" stroke-width="3.400" stroke-linecap="round"/><line x1="534.5" y1="867.5" x2="539.5" y2="872.5" stroke="#e4e8ed" stroke-width="1.700" stroke-linecap="round"/><circle cx="530.5" cy="863.5" r="5.600" fill="#a9c8ee" stroke="#d9dde2" stroke-width="1.500"/><path d="M527.500 863.500h6M530.500 860.500v6" stroke="#fff" stroke-width="1.600"/><line x1="565.5" y1="867.5" x2="570.5" y2="872.5" stroke="#7d838b" stroke-width="3.400" stroke-linecap="round"/><line x1="565.5" y1="867.5" x2="570.5" y2="872.5" stroke="#e4e8ed" stroke-width="1.700" stroke-linecap="round"/><circle cx="561.5" cy="863.5" r="5.600" fill="#a9c8ee" stroke="#d9dde2" stroke-width="1.500"/><path d="M558.500 863.500h6" stroke="#fff" stroke-width="1.600"/><defs><linearGradient id="bg5" x1="0" y1="0" x2="0" y2="1"><stop offset="0" stop-color="#54687e"/><stop offset="1" stop-color="#9bbee5"/></linearGradient></defs><rect x="583" y="854" width="22" height="22" rx="1.500" fill="url(#bg5)" stroke="#1b2431" stroke-width=".8"/><polygon points="618,853.500 632,853.500 637,858 637,872 632,877 618,877 613,872 613,858" fill="#4f80b8"/><polygon points="619.500,856 630.500,856 634.500,860 634.500,870 630.500,874 619.500,874 615.500,870 615.500,860" fill="#6a9bd2"/><polygon points="625,860 629,866 625,875 621,866" fill="#4f80b8"/><polygon points="620,862 623,865.500 620,869" fill="#1f3553"/><polygon points="630,862 627,865.500 630,869" fill="#1f3553"/><polygon points="622,853.500 628,853.500 625,857" fill="#8fc0f0"/><polygon points="611.500,876 617.500,871 616.500,875.500" fill="#ef7a42"/><polygon points="638.500,875 632.500,870 634,875" fill="#4fc46a"/><path d="M648.500 855.500h16q1.500 0 1.800 1.500l1.500 16.500q.2 2-1.800 2h-19q-2 0-1.800-2l1.500-16.500q.3-1.500 1.800-1.500z" fill="#93b1d6" stroke="#1b2431" stroke-width=".6"/><path d="M646.500 865.500h20" stroke="#b9a3ad" stroke-width=".6"/><path d="M656.500 856v19" stroke="#8fc2a8" stroke-width=".6"/><ellipse cx="718" cy="870" rx="10" ry="4.200" fill="none" stroke="#fff" stroke-width="1.500"/><rect x="712.500" y="856" width="11" height="7.500" rx="1" fill="#a8c8ee" stroke="#1b2431" stroke-width=".5"/><circle cx="718" cy="860" r="2.200" fill="#304056"/><polygon points="716,872 720,874.500 716,877" fill="#fff"/><g transform="rotate(45 749 865)"><rect x="745" y="853" width="8" height="24" rx="1" fill="#5b9be3"/><rect x="737" y="861" width="24" height="8" rx="1" fill="#5b9be3"/></g><circle cx="749" cy="865" r="2.200" fill="#1b3f77"/><rect x="768.500" y="857" width="17" height="12" rx="1" fill="#a8c8ee" stroke="#1b2431" stroke-width=".5"/><rect x="773" y="854.500" width="7" height="3" fill="#a8c8ee"/><circle cx="777" cy="863" r="3.600" fill="#304056"/><circle cx="777" cy="863" r="2" fill="#a8c8ee"/><rect x="779" y="865.500" width="10.500" height="10.500" rx="1" fill="#2a3546" stroke="#10151c" stroke-width=".8"/><rect x="781" y="866" width="6.500" height="3.600" fill="#dfe6ee"/><rect x="780.800" y="871.800" width="7" height="4" fill="#a8c8ee"/><rect x="806.500" y="854.700" width="14.500" height="13.500" fill="#a8c8ee" stroke="#1b2431" stroke-width=".7"/><path d="M808.500 858.200h10.500M808.500 861h10.500M808.500 863.800h10.500" stroke="#7da7da" stroke-width="1"/><circle cx="804" cy="872.300" r="3.200" fill="#d8dde3" stroke="#1b2431" stroke-width=".6"/><rect x="831" y="855.500" width="22" height="19.500" fill="#a8c8ee" stroke="#1b2431" stroke-width=".6"/><path d="M833.500 860h17M833.500 863h17M833.500 866h17M833.500 869h17" stroke="#7da7da" stroke-width="1.100"/><circle cx="868" cy="859.5" r="4" fill="url(#bl)" stroke="#5c7da6" stroke-width=".5"/><circle cx="876.5" cy="864" r="4" fill="url(#bl)" stroke="#5c7da6" stroke-width=".5"/><circle cx="868.5" cy="870" r="4.3" fill="url(#bl)" stroke="#5c7da6" stroke-width=".5"/><ellipse cx="877" cy="873" rx="5" ry="3.200" fill="#1b2431" stroke="#c9d4e0" stroke-width="1"/><circle cx="877" cy="873" r="1.300" fill="#c9d4e0"/><polygon points="881,876.500 886,876.500 883.500,879.500" fill="#fff"/><path d="M894 865c3-5.300 7-6.500 10-6.500s7 1.200 10 6.500c-3 5.300-7 6.500-10 6.500s-7-1.200-10-6.500z" fill="#fff" stroke="#1b2431" stroke-width=".6"/><circle cx="904" cy="865" r="4.300" fill="#304056"/><circle cx="904" cy="865" r="1.800" fill="#fff"/><polygon points="929.500,857.300 940.800,864.500 929.500,871.700" fill="#fff" stroke="#1b2431" stroke-width=".5"/></g></svg>
<span class="t " style="left:677.3px;top:857px;font-size:16px;color:#fff;letter-spacing:0.06px;-webkit-text-stroke:.4px #fff;">1Å</span>
<div class="b" style="left:676.7px;top:872.2px;width:21.1px;height:2.4px;background:#fff;"></div>
<!-- right -->
<div class="b" style="left:1097px;top:152px;width:503px;height:735px;background:#304056;"></div>
<div class="b" style="left:1097px;top:152px;width:1px;height:709px;background:#40597a;"></div>
<div class="b" style="left:1097px;top:152px;width:503px;height:31px;background:#40597a;"></div>
<svg class="b" style="left:1103px;top:158px;" width="22" height="21" viewBox="0 0 22 21"><rect x="1.300" y="2.500" width="3.500" height="16.500" fill="#7b9cc4"/><rect x="4.600" y="1.800" width="3.500" height="17.600" fill="#94b5dc"/>
<path d="M8 1.300h8l4.500 4.500v14h-12.500z" fill="#a8c8ee" stroke="#10151c" stroke-width=".8"/><path d="M16 1.300v4.500h4.500z" fill="#dbe8f8"/></svg>
<span class="t " style="left:1138.5px;top:161px;font-size:12px;color:#fff;letter-spacing:-0.44px;font-weight:bold;">Assets - Alkanes</span>
<svg class="b" style="left:1558.6px;top:161px;" width="34" height="16" viewBox="0 0 34 16"><path d="M0.500 7l7-1.200v-3.300l2.300 1.300h4.500l1.200-1.800v10l-1.200-1.800h-4.500l-2.300 1.300v-3.300z" fill="#6c9bd0"/>
<g stroke="#6c9bd0" stroke-width="1.900" stroke-linecap="round"><line x1="20.500" y1="1.200" x2="32.500" y2="13.500"/><line x1="32.500" y1="1.200" x2="20.500" y2="13.500"/></g></svg>
<svg class="b" style="left:1109px;top:192.5px;" width="20" height="14" viewBox="0 0 20 14"><path d="M.8 7l8-6.300v3.900h9.600v4.800h-9.600v3.900z" fill="#a8c8ee" stroke="#1b2431" stroke-width=".6" /></svg>
<svg class="b" style="left:1134px;top:192.5px;" width="20" height="14" viewBox="0 0 20 14"><path d="M.8 7l8-6.300v3.900h9.600v4.800h-9.600v3.900z" fill="#d3d7dc" stroke="#1b2431" stroke-width=".6" transform="translate(19.200,0) scale(-1,1)"/></svg>
<svg class="b" style="left:1160px;top:190px;" width="21" height="19" viewBox="0 0 21 19"><path d="M10.500 1l9.500 8.500h-2.800v8.500h-4.700v-5.500h-4v5.500h-4.700v-8.500h-2.800z" fill="#a8c8ee" stroke="#1b2431" stroke-width=".6"/></svg>
<div class="b" style="left:1193px;top:186px;width:403px;height:26px;background:#fff;"></div>
<span class="t " style="left:1199.3px;top:191.5px;font-size:12px;color:#838383;letter-spacing:-0.22px;">Filter assets... (Shift+A)</span>
<svg class="b" style="left:1574px;top:190.5px;" width="17" height="17" viewBox="0 0 17 17"><line x1="10.5" y1="10.5" x2="15.3" y2="15.3" stroke="#8a8f96" stroke-width="3.2" stroke-linecap="round"/>
<line x1="10.5" y1="10.5" x2="15.3" y2="15.3" stroke="#d8dde3" stroke-width="1.6" stroke-linecap="round"/>
<circle cx="6.8" cy="6.8" r="5.6" fill="#a9c8ee" stroke="#8c9198" stroke-width="1.4"/>
<circle cx="6.8" cy="6.8" r="4.3" fill="none" stroke="#d5e4f7" stroke-width="0.9"/></svg>
<div class="b" style="left:1248px;top:218.5px;width:72px;height:72.5px;background:#40679a;"></div>
<svg class="b" style="left:1114px;top:220px;" width="52" height="52" viewBox="0 0 52 52"><rect width="52" height="52" fill="#fff"/><line x1="26" y1="25" x2="14" y2="17" stroke="#45494f" stroke-width="1.7"/><line x1="26" y1="25" x2="38" y2="16" stroke="#45494f" stroke-width="1.7"/><line x1="26" y1="25" x2="26" y2="40" stroke="#45494f" stroke-width="1.7"/><line x1="14" y1="17" x2="13" y2="7.5" stroke="#45494f" stroke-width="1.7"/><line x1="14" y1="17" x2="5" y2="23" stroke="#45494f" stroke-width="1.7"/><line x1="38" y1="16" x2="38.5" y2="6.5" stroke="#45494f" stroke-width="1.7"/><line x1="38" y1="16" x2="47" y2="21.5" stroke="#45494f" stroke-width="1.7"/><line x1="26" y1="40" x2="17.5" y2="44.5" stroke="#45494f" stroke-width="1.7"/><line x1="26" y1="40" x2="35" y2="44" stroke="#45494f" stroke-width="1.7"/><circle cx="26" cy="25" r="2.6" fill="#cfd2d5" stroke="#85898e" stroke-width=".5"/><circle cx="14" cy="17" r="3" fill="#4a4e54"/><circle cx="38" cy="16" r="3" fill="#4a4e54"/><circle cx="26" cy="40" r="3" fill="#4a4e54"/><circle cx="13" cy="7.5" r="2.5" fill="#cfd2d5" stroke="#85898e" stroke-width=".5"/><circle cx="5" cy="23" r="2.5" fill="#cfd2d5" stroke="#85898e" stroke-width=".5"/><circle cx="38.5" cy="6.5" r="2.5" fill="#cfd2d5" stroke="#85898e" stroke-width=".5"/><circle cx="47" cy="21.5" r="2.5" fill="#cfd2d5" stroke="#85898e" stroke-width=".5"/><circle cx="17.5" cy="44.5" r="2.5" fill="#cfd2d5" stroke="#85898e" stroke-width=".5"/><circle cx="35" cy="44" r="2.5" fill="#cfd2d5" stroke="#85898e" stroke-width=".5"/></svg>
<span class="t " style="left:1108.2px;top:274.5px;font-size:12px;color:#fff;letter-spacing:0.08px;">2-methylp...</span>
<svg class="b" style="left:1186px;top:220px;" width="52" height="52" viewBox="0 0 52 52"><rect width="52" height="52" fill="#fff"/><line x1="10" y1="25" x2="21.7" y2="29.8" stroke="#45494f" stroke-width="1.7"/><line x1="21.7" y1="29.8" x2="30" y2="21.6" stroke="#45494f" stroke-width="1.7"/><line x1="30" y1="21.6" x2="41" y2="26.4" stroke="#45494f" stroke-width="1.7"/><line x1="10" y1="25" x2="9.6" y2="20.2" stroke="#45494f" stroke-width="1.7"/><line x1="10" y1="25" x2="4.5" y2="31.6" stroke="#45494f" stroke-width="1.7"/><line x1="21.7" y1="29.8" x2="22.4" y2="36" stroke="#45494f" stroke-width="1.7"/><line x1="30" y1="21.6" x2="29.3" y2="16.5" stroke="#45494f" stroke-width="1.7"/><line x1="41" y1="26.4" x2="47.5" y2="20.9" stroke="#45494f" stroke-width="1.7"/><line x1="41" y1="26.4" x2="42.6" y2="31.9" stroke="#45494f" stroke-width="1.7"/><circle cx="10" cy="25" r="2.6" fill="#4a4e54"/><circle cx="21.7" cy="29.8" r="2.6" fill="#4a4e54"/><circle cx="30" cy="21.6" r="2.6" fill="#4a4e54"/><circle cx="41" cy="26.4" r="2.6" fill="#4a4e54"/><circle cx="9.6" cy="20.2" r="2.2" fill="#cfd2d5" stroke="#85898e" stroke-width=".5"/><circle cx="4.5" cy="31.6" r="2.2" fill="#cfd2d5" stroke="#85898e" stroke-width=".5"/><circle cx="22.4" cy="36" r="2.2" fill="#cfd2d5" stroke="#85898e" stroke-width=".5"/><circle cx="29.3" cy="16.5" r="2.2" fill="#cfd2d5" stroke="#85898e" stroke-width=".5"/><circle cx="47.5" cy="20.9" r="2.2" fill="#cfd2d5" stroke="#85898e" stroke-width=".5"/><circle cx="42.6" cy="31.9" r="2.2" fill="#cfd2d5" stroke="#85898e" stroke-width=".5"/></svg>
<span class="t " style="left:1194.2px;top:274.5px;font-size:12px;color:#fff;letter-spacing:0.05px;">butane</span>
<svg class="b" style="left:1258px;top:220px;" width="52" height="52" viewBox="0 0 52 52"><rect width="52" height="52" fill="#a9cdf1"/><line x1="7.0" y1="24.1" x2="7.0" y2="21.5" stroke="#8d9196" stroke-width="0.72"/><line x1="11.2" y1="27.9" x2="11.2" y2="30.5" stroke="#8d9196" stroke-width="0.72"/><line x1="15.4" y1="24.1" x2="15.4" y2="21.5" stroke="#8d9196" stroke-width="0.72"/><line x1="19.7" y1="27.9" x2="19.7" y2="30.5" stroke="#8d9196" stroke-width="0.72"/><line x1="23.9" y1="24.1" x2="23.9" y2="21.5" stroke="#8d9196" stroke-width="0.72"/><line x1="28.1" y1="27.9" x2="28.1" y2="30.5" stroke="#8d9196" stroke-width="0.72"/><line x1="32.3" y1="24.1" x2="32.3" y2="21.5" stroke="#8d9196" stroke-width="0.72"/><line x1="36.6" y1="27.9" x2="36.6" y2="30.5" stroke="#8d9196" stroke-width="0.72"/><line x1="40.8" y1="24.1" x2="40.8" y2="21.5" stroke="#8d9196" stroke-width="0.72"/><line x1="45.0" y1="27.9" x2="45.0" y2="30.5" stroke="#8d9196" stroke-width="0.72"/><line x1="7.0" y1="24.1" x2="4.7" y2="25.5" stroke="#8d9196" stroke-width="0.72"/><line x1="45.0" y1="27.9" x2="47.3" y2="26.5" stroke="#8d9196" stroke-width="0.72"/><polyline points="7.0,24.1 11.2,27.9 15.4,24.1 19.7,27.9 23.9,24.1 28.1,27.9 32.3,24.1 36.6,27.9 40.8,24.1 45.0,27.9" fill="none" stroke="#3f4348" stroke-width="0.9"/><circle cx="7.0" cy="21.5" r="0.8" fill="#c9ccd0" stroke="#8a8e93" stroke-width=".4"/><circle cx="11.2" cy="30.5" r="0.8" fill="#c9ccd0" stroke="#8a8e93" stroke-width=".4"/><circle cx="15.4" cy="21.5" r="0.8" fill="#c9ccd0" stroke="#8a8e93" stroke-width=".4"/><circle cx="19.7" cy="30.5" r="0.8" fill="#c9ccd0" stroke="#8a8e93" stroke-width=".4"/><circle cx="23.9" cy="21.5" r="0.8" fill="#c9ccd0" stroke="#8a8e93" stroke-width=".4"/><circle cx="28.1" cy="30.5" r="0.8" fill="#c9ccd0" stroke="#8a8e93" stroke-width=".4"/><circle cx="32.3" cy="21.5" r="0.8" fill="#c9ccd0" stroke="#8a8e93" stroke-width=".4"/><circle cx="36.6" cy="30.5" r="0.8" fill="#c9ccd0" stroke="#8a8e93" stroke-width=".4"/><circle cx="40.8" cy="21.5" r="0.8" fill="#c9ccd0" stroke="#8a8e93" stroke-width=".4"/><circle cx="45.0" cy="30.5" r="0.8" fill="#c9ccd0" stroke="#8a8e93" stroke-width=".4"/><circle cx="4.7" cy="25.5" r="0.8" fill="#c9ccd0" stroke="#8a8e93" stroke-width=".4"/><circle cx="47.3" cy="26.5" r="0.8" fill="#c9ccd0" stroke="#8a8e93" stroke-width=".4"/><circle cx="7.0" cy="24.1" r="1.2" fill="#4a4e54"/><circle cx="11.2" cy="27.9" r="1.2" fill="#4a4e54"/><circle cx="15.4" cy="24.1" r="1.2" fill="#4a4e54"/><circle cx="19.7" cy="27.9" r="1.2" fill="#4a4e54"/><circle cx="23.9" cy="24.1" r="1.2" fill="#4a4e54"/><circle cx="28.1" cy="27.9" r="1.2" fill="#4a4e54"/><circle cx="32.3" cy="24.1" r="1.2" fill="#4a4e54"/><circle cx="36.6" cy="27.9" r="1.2" fill="#4a4e54"/><circle cx="40.8" cy="24.1" r="1.2" fill="#4a4e54"/><circle cx="45.0" cy="27.9" r="1.2" fill="#4a4e54"/></svg>
<span class="t " style="left:1265.6px;top:274.5px;font-size:12px;color:#fff;letter-spacing:-0.33px;">decane</span>
<svg class="b" style="left:1330px;top:220px;" width="52" height="52" viewBox="0 0 52 52"><rect width="52" height="52" fill="#fff"/><line x1="7.0" y1="24.3" x2="7.0" y2="22.1" stroke="#8d9196" stroke-width="0.64"/><line x1="10.5" y1="27.7" x2="10.5" y2="29.9" stroke="#8d9196" stroke-width="0.64"/><line x1="13.9" y1="24.3" x2="13.9" y2="22.1" stroke="#8d9196" stroke-width="0.64"/><line x1="17.4" y1="27.7" x2="17.4" y2="29.9" stroke="#8d9196" stroke-width="0.64"/><line x1="20.8" y1="24.3" x2="20.8" y2="22.1" stroke="#8d9196" stroke-width="0.64"/><line x1="24.3" y1="27.7" x2="24.3" y2="29.9" stroke="#8d9196" stroke-width="0.64"/><line x1="27.7" y1="24.3" x2="27.7" y2="22.1" stroke="#8d9196" stroke-width="0.64"/><line x1="31.2" y1="27.7" x2="31.2" y2="29.9" stroke="#8d9196" stroke-width="0.64"/><line x1="34.6" y1="24.3" x2="34.6" y2="22.1" stroke="#8d9196" stroke-width="0.64"/><line x1="38.1" y1="27.7" x2="38.1" y2="29.9" stroke="#8d9196" stroke-width="0.64"/><line x1="41.5" y1="24.3" x2="41.5" y2="22.1" stroke="#8d9196" stroke-width="0.64"/><line x1="45.0" y1="27.7" x2="45.0" y2="29.9" stroke="#8d9196" stroke-width="0.64"/><line x1="7.0" y1="24.3" x2="5.0" y2="25.5" stroke="#8d9196" stroke-width="0.64"/><line x1="45.0" y1="27.7" x2="47.0" y2="26.5" stroke="#8d9196" stroke-width="0.64"/><polyline points="7.0,24.3 10.5,27.7 13.9,24.3 17.4,27.7 20.8,24.3 24.3,27.7 27.7,24.3 31.2,27.7 34.6,24.3 38.1,27.7 41.5,24.3 45.0,27.7" fill="none" stroke="#3f4348" stroke-width="0.8"/><circle cx="7.0" cy="22.1" r="0.7" fill="#c9ccd0" stroke="#8a8e93" stroke-width=".4"/><circle cx="10.5" cy="29.9" r="0.7" fill="#c9ccd0" stroke="#8a8e93" stroke-width=".4"/><circle cx="13.9" cy="22.1" r="0.7" fill="#c9ccd0" stroke="#8a8e93" stroke-width=".4"/><circle cx="17.4" cy="29.9" r="0.7" fill="#c9ccd0" stroke="#8a8e93" stroke-width=".4"/><circle cx="20.8" cy="22.1" r="0.7" fill="#c9ccd0" stroke="#8a8e93" stroke-width=".4"/><circle cx="24.3" cy="29.9" r="0.7" fill="#c9ccd0" stroke="#8a8e93" stroke-width=".4"/><circle cx="27.7" cy="22.1" r="0.7" fill="#c9ccd0" stroke="#8a8e93" stroke-width=".4"/><circle cx="31.2" cy="29.9" r="0.7" fill="#c9ccd0" stroke="#8a8e93" stroke-width=".4"/><circle cx="34.6" cy="22.1" r="0.7" fill="#c9ccd0" stroke="#8a8e93" stroke-width=".4"/><circle cx="38.1" cy="29.9" r="0.7" fill="#c9ccd0" stroke="#8a8e93" stroke-width=".4"/><circle cx="41.5" cy="22.1" r="0.7" fill="#c9ccd0" stroke="#8a8e93" stroke-width=".4"/><circle cx="45.0" cy="29.9" r="0.7" fill="#c9ccd0" stroke="#8a8e93" stroke-width=".4"/><circle cx="5.0" cy="25.5" r="0.7" fill="#c9ccd0" stroke="#8a8e93" stroke-width=".4"/><circle cx="47.0" cy="26.5" r="0.7" fill="#c9ccd0" stroke="#8a8e93" stroke-width=".4"/><circle cx="7.0" cy="24.3" r="1.1" fill="#4a4e54"/><circle cx="10.5" cy="27.7" r="1.1" fill="#4a4e54"/><circle cx="13.9" cy="24.3" r="1.1" fill="#4a4e54"/><circle cx="17.4" cy="27.7" r="1.1" fill="#4a4e54"/><circle cx="20.8" cy="24.3" r="1.1" fill="#4a4e54"/><circle cx="24.3" cy="27.7" r="1.1" fill="#4a4e54"/><circle cx="27.7" cy="24.3" r="1.1" fill="#4a4e54"/><circle cx="31.2" cy="27.7" r="1.1" fill="#4a4e54"/><circle cx="34.6" cy="24.3" r="1.1" fill="#4a4e54"/><circle cx="38.1" cy="27.7" r="1.1" fill="#4a4e54"/><circle cx="41.5" cy="24.3" r="1.1" fill="#4a4e54"/><circle cx="45.0" cy="27.7" r="1.1" fill="#4a4e54"/></svg>
<span class="t " style="left:1330.7px;top:274.5px;font-size:12px;color:#fff;letter-spacing:-0.18px;">dodecane</span>
<svg class="b" style="left:1402px;top:220px;" width="52" height="52" viewBox="0 0 52 52"><rect width="52" height="52" fill="#fff"/><line x1="6.5" y1="24.9" x2="6.5" y2="23.5" stroke="#8d9196" stroke-width="0.48"/><line x1="8.6" y1="27.1" x2="8.6" y2="28.5" stroke="#8d9196" stroke-width="0.48"/><line x1="10.6" y1="24.9" x2="10.6" y2="23.5" stroke="#8d9196" stroke-width="0.48"/><line x1="12.7" y1="27.1" x2="12.7" y2="28.5" stroke="#8d9196" stroke-width="0.48"/><line x1="14.7" y1="24.9" x2="14.7" y2="23.5" stroke="#8d9196" stroke-width="0.48"/><line x1="16.8" y1="27.1" x2="16.8" y2="28.5" stroke="#8d9196" stroke-width="0.48"/><line x1="18.8" y1="24.9" x2="18.8" y2="23.5" stroke="#8d9196" stroke-width="0.48"/><line x1="20.9" y1="27.1" x2="20.9" y2="28.5" stroke="#8d9196" stroke-width="0.48"/><line x1="22.9" y1="24.9" x2="22.9" y2="23.5" stroke="#8d9196" stroke-width="0.48"/><line x1="25.0" y1="27.1" x2="25.0" y2="28.5" stroke="#8d9196" stroke-width="0.48"/><line x1="27.0" y1="24.9" x2="27.0" y2="23.5" stroke="#8d9196" stroke-width="0.48"/><line x1="29.1" y1="27.1" x2="29.1" y2="28.5" stroke="#8d9196" stroke-width="0.48"/><line x1="31.1" y1="24.9" x2="31.1" y2="23.5" stroke="#8d9196" stroke-width="0.48"/><line x1="33.2" y1="27.1" x2="33.2" y2="28.5" stroke="#8d9196" stroke-width="0.48"/><line x1="35.2" y1="24.9" x2="35.2" y2="23.5" stroke="#8d9196" stroke-width="0.48"/><line x1="37.3" y1="27.1" x2="37.3" y2="28.5" stroke="#8d9196" stroke-width="0.48"/><line x1="39.3" y1="24.9" x2="39.3" y2="23.5" stroke="#8d9196" stroke-width="0.48"/><line x1="41.4" y1="27.1" x2="41.4" y2="28.5" stroke="#8d9196" stroke-width="0.48"/><line x1="43.4" y1="24.9" x2="43.4" y2="23.5" stroke="#8d9196" stroke-width="0.48"/><line x1="45.5" y1="27.1" x2="45.5" y2="28.5" stroke="#8d9196" stroke-width="0.48"/><line x1="6.5" y1="24.9" x2="5.2" y2="25.7" stroke="#8d9196" stroke-width="0.48"/><line x1="45.5" y1="27.1" x2="46.8" y2="26.3" stroke="#8d9196" stroke-width="0.48"/><polyline points="6.5,24.9 8.6,27.1 10.6,24.9 12.7,27.1 14.7,24.9 16.8,27.1 18.8,24.9 20.9,27.1 22.9,24.9 25.0,27.1 27.0,24.9 29.1,27.1 31.1,24.9 33.2,27.1 35.2,24.9 37.3,27.1 39.3,24.9 41.4,27.1 43.4,24.9 45.5,27.1" fill="none" stroke="#3f4348" stroke-width="0.6"/><circle cx="6.5" cy="23.5" r="0.4" fill="#c9ccd0" stroke="#8a8e93" stroke-width=".4"/><circle cx="8.6" cy="28.5" r="0.4" fill="#c9ccd0" stroke="#8a8e93" stroke-width=".4"/><circle cx="10.6" cy="23.5" r="0.4" fill="#c9ccd0" stroke="#8a8e93" stroke-width=".4"/><circle cx="12.7" cy="28.5" r="0.4" fill="#c9ccd0" stroke="#8a8e93" stroke-width=".4"/><circle cx="14.7" cy="23.5" r="0.4" fill="#c9ccd0" stroke="#8a8e93" stroke-width=".4"/><circle cx="16.8" cy="28.5" r="0.4" fill="#c9ccd0" stroke="#8a8e93" stroke-width=".4"/><circle cx="18.8" cy="23.5" r="0.4" fill="#c9ccd0" stroke="#8a8e93" stroke-width=".4"/><circle cx="20.9" cy="28.5" r="0.4" fill="#c9ccd0" stroke="#8a8e93" stroke-width=".4"/><circle cx="22.9" cy="23.5" r="0.4" fill="#c9ccd0" stroke="#8a8e93" stroke-width=".4"/><circle cx="25.0" cy="28.5" r="0.4" fill="#c9ccd0" stroke="#8a8e93" stroke-width=".4"/><circle cx="27.0" cy="23.5" r="0.4" fill="#c9ccd0" stroke="#8a8e93" stroke-width=".4"/><circle cx="29.1" cy="28.5" r="0.4" fill="#c9ccd0" stroke="#8a8e93" stroke-width=".4"/><circle cx="31.1" cy="23.5" r="0.4" fill="#c9ccd0" stroke="#8a8e93" stroke-width=".4"/><circle cx="33.2" cy="28.5" r="0.4" fill="#c9ccd0" stroke="#8a8e93" stroke-width=".4"/><circle cx="35.2" cy="23.5" r="0.4" fill="#c9ccd0" stroke="#8a8e93" stroke-width=".4"/><circle cx="37.3" cy="28.5" r="0.4" fill="#c9ccd0" stroke="#8a8e93" stroke-width=".4"/><circle cx="39.3" cy="23.5" r="0.4" fill="#c9ccd0" stroke="#8a8e93" stroke-width=".4"/><circle cx="41.4" cy="28.5" r="0.4" fill="#c9ccd0" stroke="#8a8e93" stroke-width=".4"/><circle cx="43.4" cy="23.5" r="0.4" fill="#c9ccd0" stroke="#8a8e93" stroke-width=".4"/><circle cx="45.5" cy="28.5" r="0.4" fill="#c9ccd0" stroke="#8a8e93" stroke-width=".4"/><circle cx="5.2" cy="25.7" r="0.4" fill="#c9ccd0" stroke="#8a8e93" stroke-width=".4"/><circle cx="46.8" cy="26.3" r="0.4" fill="#c9ccd0" stroke="#8a8e93" stroke-width=".4"/><circle cx="6.5" cy="24.9" r="0.75" fill="#4a4e54"/><circle cx="8.6" cy="27.1" r="0.75" fill="#4a4e54"/><circle cx="10.6" cy="24.9" r="0.75" fill="#4a4e54"/><circle cx="12.7" cy="27.1" r="0.75" fill="#4a4e54"/><circle cx="14.7" cy="24.9" r="0.75" fill="#4a4e54"/><circle cx="16.8" cy="27.1" r="0.75" fill="#4a4e54"/><circle cx="18.8" cy="24.9" r="0.75" fill="#4a4e54"/><circle cx="20.9" cy="27.1" r="0.75" fill="#4a4e54"/><circle cx="22.9" cy="24.9" r="0.75" fill="#4a4e54"/><circle cx="25.0" cy="27.1" r="0.75" fill="#4a4e54"/><circle cx="27.0" cy="24.9" r="0.75" fill="#4a4e54"/><circle cx="29.1" cy="27.1" r="0.75" fill="#4a4e54"/><circle cx="31.1" cy="24.9" r="0.75" fill="#4a4e54"/><circle cx="33.2" cy="27.1" r="0.75" fill="#4a4e54"/><circle cx="35.2" cy="24.9" r="0.75" fill="#4a4e54"/><circle cx="37.3" cy="27.1" r="0.75" fill="#4a4e54"/><circle cx="39.3" cy="24.9" r="0.75" fill="#4a4e54"/><circle cx="41.4" cy="27.1" r="0.75" fill="#4a4e54"/><circle cx="43.4" cy="24.9" r="0.75" fill="#4a4e54"/><circle cx="45.5" cy="27.1" r="0.75" fill="#4a4e54"/></svg>
<span class="t " style="left:1405.6px;top:274.5px;font-size:12px;color:#fff;letter-spacing:-0.30px;">eicosane</span>
<svg class="b" style="left:1474px;top:220px;" width="52" height="52" viewBox="0 0 52 52"><rect width="52" height="52" fill="#fff"/><line x1="17.6" y1="25.7" x2="33.7" y2="25.7" stroke="#45494f" stroke-width="2.2"/><line x1="17.6" y1="25.7" x2="13" y2="14" stroke="#45494f" stroke-width="2.2"/><line x1="17.6" y1="25.7" x2="13" y2="31.6" stroke="#45494f" stroke-width="2.2"/><line x1="17.6" y1="25.7" x2="14.5" y2="23" stroke="#45494f" stroke-width="2.2"/><line x1="33.7" y1="25.7" x2="38.8" y2="19.5" stroke="#45494f" stroke-width="2.2"/><line x1="33.7" y1="25.7" x2="38.8" y2="36.7" stroke="#45494f" stroke-width="2.2"/><line x1="33.7" y1="25.7" x2="37.5" y2="22.5" stroke="#45494f" stroke-width="2.2"/><circle cx="17.6" cy="25.7" r="3.2" fill="#4a4e54"/><circle cx="33.7" cy="25.7" r="3.2" fill="#4a4e54"/><circle cx="13" cy="14" r="2.8" fill="#cfd2d5" stroke="#85898e" stroke-width=".5"/><circle cx="13" cy="31.6" r="2.8" fill="#cfd2d5" stroke="#85898e" stroke-width=".5"/><circle cx="14.5" cy="23" r="2" fill="#cfd2d5" stroke="#85898e" stroke-width=".5"/><circle cx="38.8" cy="19.5" r="2.8" fill="#cfd2d5" stroke="#85898e" stroke-width=".5"/><circle cx="38.8" cy="36.7" r="2.8" fill="#cfd2d5" stroke="#85898e" stroke-width=".5"/><circle cx="37.5" cy="22.5" r="2" fill="#cfd2d5" stroke="#85898e" stroke-width=".5"/></svg>
<span class="t " style="left:1482.4px;top:274.5px;font-size:12px;color:#fff;letter-spacing:-0.17px;">ethane</span>
<svg class="b" style="left:1114px;top:292px;" width="52" height="52" viewBox="0 0 52 52"><rect width="52" height="52" fill="#fff"/><line x1="7.5" y1="23.4" x2="7.5" y2="19.6" stroke="#8d9196" stroke-width="0.88"/><line x1="13.7" y1="28.6" x2="13.7" y2="32.4" stroke="#8d9196" stroke-width="0.88"/><line x1="19.8" y1="23.4" x2="19.8" y2="19.6" stroke="#8d9196" stroke-width="0.88"/><line x1="26.0" y1="28.6" x2="26.0" y2="32.4" stroke="#8d9196" stroke-width="0.88"/><line x1="32.2" y1="23.4" x2="32.2" y2="19.6" stroke="#8d9196" stroke-width="0.88"/><line x1="38.3" y1="28.6" x2="38.3" y2="32.4" stroke="#8d9196" stroke-width="0.88"/><line x1="44.5" y1="23.4" x2="44.5" y2="19.6" stroke="#8d9196" stroke-width="0.88"/><line x1="7.5" y1="23.4" x2="4.1" y2="25.5" stroke="#8d9196" stroke-width="0.88"/><line x1="44.5" y1="23.4" x2="47.9" y2="25.5" stroke="#8d9196" stroke-width="0.88"/><polyline points="7.5,23.4 13.7,28.6 19.8,23.4 26.0,28.6 32.2,23.4 38.3,28.6 44.5,23.4" fill="none" stroke="#3f4348" stroke-width="1.1"/><circle cx="7.5" cy="19.6" r="1.2" fill="#c9ccd0" stroke="#8a8e93" stroke-width=".4"/><circle cx="13.7" cy="32.4" r="1.2" fill="#c9ccd0" stroke="#8a8e93" stroke-width=".4"/><circle cx="19.8" cy="19.6" r="1.2" fill="#c9ccd0" stroke="#8a8e93" stroke-width=".4"/><circle cx="26.0" cy="32.4" r="1.2" fill="#c9ccd0" stroke="#8a8e93" stroke-width=".4"/><circle cx="32.2" cy="19.6" r="1.2" fill="#c9ccd0" stroke="#8a8e93" stroke-width=".4"/><circle cx="38.3" cy="32.4" r="1.2" fill="#c9ccd0" stroke="#8a8e93" stroke-width=".4"/><circle cx="44.5" cy="19.6" r="1.2" fill="#c9ccd0" stroke="#8a8e93" stroke-width=".4"/><circle cx="4.1" cy="25.5" r="1.2" fill="#c9ccd0" stroke="#8a8e93" stroke-width=".4"/><circle cx="47.9" cy="25.5" r="1.2" fill="#c9ccd0" stroke="#8a8e93" stroke-width=".4"/><circle cx="7.5" cy="23.4" r="1.6" fill="#4a4e54"/><circle cx="13.7" cy="28.6" r="1.6" fill="#4a4e54"/><circle cx="19.8" cy="23.4" r="1.6" fill="#4a4e54"/><circle cx="26.0" cy="28.6" r="1.6" fill="#4a4e54"/><circle cx="32.2" cy="23.4" r="1.6" fill="#4a4e54"/><circle cx="38.3" cy="28.6" r="1.6" fill="#4a4e54"/><circle cx="44.5" cy="23.4" r="1.6" fill="#4a4e54"/></svg>
<span class="t " style="left:1119.3px;top:346.5px;font-size:12px;color:#fff;letter-spacing:-0.10px;">heptane</span>
<svg class="b" style="left:1186px;top:292px;" width="52" height="52" viewBox="0 0 52 52"><rect width="52" height="52" fill="#fff"/><line x1="6.5" y1="24.7" x2="6.5" y2="23.0" stroke="#8d9196" stroke-width="0.56"/><line x1="9.1" y1="27.3" x2="9.1" y2="29.0" stroke="#8d9196" stroke-width="0.56"/><line x1="11.7" y1="24.7" x2="11.7" y2="23.0" stroke="#8d9196" stroke-width="0.56"/><line x1="14.3" y1="27.3" x2="14.3" y2="29.0" stroke="#8d9196" stroke-width="0.56"/><line x1="16.9" y1="24.7" x2="16.9" y2="23.0" stroke="#8d9196" stroke-width="0.56"/><line x1="19.5" y1="27.3" x2="19.5" y2="29.0" stroke="#8d9196" stroke-width="0.56"/><line x1="22.1" y1="24.7" x2="22.1" y2="23.0" stroke="#8d9196" stroke-width="0.56"/><line x1="24.7" y1="27.3" x2="24.7" y2="29.0" stroke="#8d9196" stroke-width="0.56"/><line x1="27.3" y1="24.7" x2="27.3" y2="23.0" stroke="#8d9196" stroke-width="0.56"/><line x1="29.9" y1="27.3" x2="29.9" y2="29.0" stroke="#8d9196" stroke-width="0.56"/><line x1="32.5" y1="24.7" x2="32.5" y2="23.0" stroke="#8d9196" stroke-width="0.56"/><line x1="35.1" y1="27.3" x2="35.1" y2="29.0" stroke="#8d9196" stroke-width="0.56"/><line x1="37.7" y1="24.7" x2="37.7" y2="23.0" stroke="#8d9196" stroke-width="0.56"/><line x1="40.3" y1="27.3" x2="40.3" y2="29.0" stroke="#8d9196" stroke-width="0.56"/><line x1="42.9" y1="24.7" x2="42.9" y2="23.0" stroke="#8d9196" stroke-width="0.56"/><line x1="45.5" y1="27.3" x2="45.5" y2="29.0" stroke="#8d9196" stroke-width="0.56"/><line x1="6.5" y1="24.7" x2="5.0" y2="25.6" stroke="#8d9196" stroke-width="0.56"/><line x1="45.5" y1="27.3" x2="47.0" y2="26.4" stroke="#8d9196" stroke-width="0.56"/><polyline points="6.5,24.7 9.1,27.3 11.7,24.7 14.3,27.3 16.9,24.7 19.5,27.3 22.1,24.7 24.7,27.3 27.3,24.7 29.9,27.3 32.5,24.7 35.1,27.3 37.7,24.7 40.3,27.3 42.9,24.7 45.5,27.3" fill="none" stroke="#3f4348" stroke-width="0.7"/><circle cx="6.5" cy="23.0" r="0.5" fill="#c9ccd0" stroke="#8a8e93" stroke-width=".4"/><circle cx="9.1" cy="29.0" r="0.5" fill="#c9ccd0" stroke="#8a8e93" stroke-width=".4"/><circle cx="11.7" cy="23.0" r="0.5" fill="#c9ccd0" stroke="#8a8e93" stroke-width=".4"/><circle cx="14.3" cy="29.0" r="0.5" fill="#c9ccd0" stroke="#8a8e93" stroke-width=".4"/><circle cx="16.9" cy="23.0" r="0.5" fill="#c9ccd0" stroke="#8a8e93" stroke-width=".4"/><circle cx="19.5" cy="29.0" r="0.5" fill="#c9ccd0" stroke="#8a8e93" stroke-width=".4"/><circle cx="22.1" cy="23.0" r="0.5" fill="#c9ccd0" stroke="#8a8e93" stroke-width=".4"/><circle cx="24.7" cy="29.0" r="0.5" fill="#c9ccd0" stroke="#8a8e93" stroke-width=".4"/><circle cx="27.3" cy="23.0" r="0.5" fill="#c9ccd0" stroke="#8a8e93" stroke-width=".4"/><circle cx="29.9" cy="29.0" r="0.5" fill="#c9ccd0" stroke="#8a8e93" stroke-width=".4"/><circle cx="32.5" cy="23.0" r="0.5" fill="#c9ccd0" stroke="#8a8e93" stroke-width=".4"/><circle cx="35.1" cy="29.0" r="0.5" fill="#c9ccd0" stroke="#8a8e93" stroke-width=".4"/><circle cx="37.7" cy="23.0" r="0.5" fill="#c9ccd0" stroke="#8a8e93" stroke-width=".4"/><circle cx="40.3" cy="29.0" r="0.5" fill="#c9ccd0" stroke="#8a8e93" stroke-width=".4"/><circle cx="42.9" cy="23.0" r="0.5" fill="#c9ccd0" stroke="#8a8e93" stroke-width=".4"/><circle cx="45.5" cy="29.0" r="0.5" fill="#c9ccd0" stroke="#8a8e93" stroke-width=".4"/><circle cx="5.0" cy="25.6" r="0.5" fill="#c9ccd0" stroke="#8a8e93" stroke-width=".4"/><circle cx="47.0" cy="26.4" r="0.5" fill="#c9ccd0" stroke="#8a8e93" stroke-width=".4"/><circle cx="6.5" cy="24.7" r="0.9" fill="#4a4e54"/><circle cx="9.1" cy="27.3" r="0.9" fill="#4a4e54"/><circle cx="11.7" cy="24.7" r="0.9" fill="#4a4e54"/><circle cx="14.3" cy="27.3" r="0.9" fill="#4a4e54"/><circle cx="16.9" cy="24.7" r="0.9" fill="#4a4e54"/><circle cx="19.5" cy="27.3" r="0.9" fill="#4a4e54"/><circle cx="22.1" cy="24.7" r="0.9" fill="#4a4e54"/><circle cx="24.7" cy="27.3" r="0.9" fill="#4a4e54"/><circle cx="27.3" cy="24.7" r="0.9" fill="#4a4e54"/><circle cx="29.9" cy="27.3" r="0.9" fill="#4a4e54"/><circle cx="32.5" cy="24.7" r="0.9" fill="#4a4e54"/><circle cx="35.1" cy="27.3" r="0.9" fill="#4a4e54"/><circle cx="37.7" cy="24.7" r="0.9" fill="#4a4e54"/><circle cx="40.3" cy="27.3" r="0.9" fill="#4a4e54"/><circle cx="42.9" cy="24.7" r="0.9" fill="#4a4e54"/><circle cx="45.5" cy="27.3" r="0.9" fill="#4a4e54"/></svg>
<span class="t " style="left:1181.5px;top:346.5px;font-size:12px;color:#fff;letter-spacing:-0.26px;">hexadecane</span>
<svg class="b" style="left:1258px;top:292px;" width="52" height="52" viewBox="0 0 52 52"><rect width="52" height="52" fill="#fff"/><line x1="8.5" y1="23.0" x2="8.5" y2="18.4" stroke="#8d9196" stroke-width="1.04"/><line x1="15.5" y1="29.0" x2="15.5" y2="33.6" stroke="#8d9196" stroke-width="1.04"/><line x1="22.5" y1="23.0" x2="22.5" y2="18.4" stroke="#8d9196" stroke-width="1.04"/><line x1="29.5" y1="29.0" x2="29.5" y2="33.6" stroke="#8d9196" stroke-width="1.04"/><line x1="36.5" y1="23.0" x2="36.5" y2="18.4" stroke="#8d9196" stroke-width="1.04"/><line x1="43.5" y1="29.0" x2="43.5" y2="33.6" stroke="#8d9196" stroke-width="1.04"/><line x1="8.5" y1="23.0" x2="4.4" y2="25.5" stroke="#8d9196" stroke-width="1.04"/><line x1="43.5" y1="29.0" x2="47.6" y2="26.5" stroke="#8d9196" stroke-width="1.04"/><polyline points="8.5,23.0 15.5,29.0 22.5,23.0 29.5,29.0 36.5,23.0 43.5,29.0" fill="none" stroke="#3f4348" stroke-width="1.3"/><circle cx="8.5" cy="18.4" r="1.5" fill="#c9ccd0" stroke="#8a8e93" stroke-width=".4"/><circle cx="15.5" cy="33.6" r="1.5" fill="#c9ccd0" stroke="#8a8e93" stroke-width=".4"/><circle cx="22.5" cy="18.4" r="1.5" fill="#c9ccd0" stroke="#8a8e93" stroke-width=".4"/><circle cx="29.5" cy="33.6" r="1.5" fill="#c9ccd0" stroke="#8a8e93" stroke-width=".4"/><circle cx="36.5" cy="18.4" r="1.5" fill="#c9ccd0" stroke="#8a8e93" stroke-width=".4"/><circle cx="43.5" cy="33.6" r="1.5" fill="#c9ccd0" stroke="#8a8e93" stroke-width=".4"/><circle cx="4.4" cy="25.5" r="1.5" fill="#c9ccd0" stroke="#8a8e93" stroke-width=".4"/><circle cx="47.6" cy="26.5" r="1.5" fill="#c9ccd0" stroke="#8a8e93" stroke-width=".4"/><circle cx="8.5" cy="23.0" r="1.9" fill="#4a4e54"/><circle cx="15.5" cy="29.0" r="1.9" fill="#4a4e54"/><circle cx="22.5" cy="23.0" r="1.9" fill="#4a4e54"/><circle cx="29.5" cy="29.0" r="1.9" fill="#4a4e54"/><circle cx="36.5" cy="23.0" r="1.9" fill="#4a4e54"/><circle cx="43.5" cy="29.0" r="1.9" fill="#4a4e54"/></svg>
<span class="t " style="left:1265.6px;top:346.5px;font-size:12px;color:#fff;letter-spacing:-0.33px;">hexane</span>
<svg class="b" style="left:1330px;top:292px;" width="52" height="52" viewBox="0 0 52 52"><rect width="52" height="52" fill="#fff"/><line x1="26" y1="22" x2="15" y2="16" stroke="#45494f" stroke-width="2.2"/><line x1="26" y1="22" x2="36" y2="19.5" stroke="#45494f" stroke-width="2.2"/><line x1="26" y1="22" x2="24" y2="34.5" stroke="#45494f" stroke-width="2.2"/><circle cx="26" cy="22" r="3.4" fill="#4a4e54"/><circle cx="15" cy="16" r="2.8" fill="#cfd2d5" stroke="#85898e" stroke-width=".5"/><circle cx="36" cy="19.5" r="2.8" fill="#cfd2d5" stroke="#85898e" stroke-width=".5"/><circle cx="24" cy="34.5" r="2.8" fill="#cfd2d5" stroke="#85898e" stroke-width=".5"/><circle cx="28" cy="18" r="2" fill="#cfd2d5" stroke="#85898e" stroke-width=".5"/></svg>
<span class="t " style="left:1333.2px;top:346.5px;font-size:12px;color:#fff;letter-spacing:0.01px;">methane</span>
<svg class="b" style="left:1402px;top:292px;" width="52" height="52" viewBox="0 0 52 52"><rect width="52" height="52" fill="#fff"/><line x1="7.0" y1="23.9" x2="7.0" y2="21.0" stroke="#8d9196" stroke-width="0.72"/><line x1="11.8" y1="28.1" x2="11.8" y2="31.0" stroke="#8d9196" stroke-width="0.72"/><line x1="16.5" y1="23.9" x2="16.5" y2="21.0" stroke="#8d9196" stroke-width="0.72"/><line x1="21.2" y1="28.1" x2="21.2" y2="31.0" stroke="#8d9196" stroke-width="0.72"/><line x1="26.0" y1="23.9" x2="26.0" y2="21.0" stroke="#8d9196" stroke-width="0.72"/><line x1="30.8" y1="28.1" x2="30.8" y2="31.0" stroke="#8d9196" stroke-width="0.72"/><line x1="35.5" y1="23.9" x2="35.5" y2="21.0" stroke="#8d9196" stroke-width="0.72"/><line x1="40.2" y1="28.1" x2="40.2" y2="31.0" stroke="#8d9196" stroke-width="0.72"/><line x1="45.0" y1="23.9" x2="45.0" y2="21.0" stroke="#8d9196" stroke-width="0.72"/><line x1="7.0" y1="23.9" x2="4.4" y2="25.5" stroke="#8d9196" stroke-width="0.72"/><line x1="45.0" y1="23.9" x2="47.6" y2="25.5" stroke="#8d9196" stroke-width="0.72"/><polyline points="7.0,23.9 11.8,28.1 16.5,23.9 21.2,28.1 26.0,23.9 30.8,28.1 35.5,23.9 40.2,28.1 45.0,23.9" fill="none" stroke="#3f4348" stroke-width="0.9"/><circle cx="7.0" cy="21.0" r="0.9" fill="#c9ccd0" stroke="#8a8e93" stroke-width=".4"/><circle cx="11.8" cy="31.0" r="0.9" fill="#c9ccd0" stroke="#8a8e93" stroke-width=".4"/><circle cx="16.5" cy="21.0" r="0.9" fill="#c9ccd0" stroke="#8a8e93" stroke-width=".4"/><circle cx="21.2" cy="31.0" r="0.9" fill="#c9ccd0" stroke="#8a8e93" stroke-width=".4"/><circle cx="26.0" cy="21.0" r="0.9" fill="#c9ccd0" stroke="#8a8e93" stroke-width=".4"/><circle cx="30.8" cy="31.0" r="0.9" fill="#c9ccd0" stroke="#8a8e93" stroke-width=".4"/><circle cx="35.5" cy="21.0" r="0.9" fill="#c9ccd0" stroke="#8a8e93" stroke-width=".4"/><circle cx="40.2" cy="31.0" r="0.9" fill="#c9ccd0" stroke="#8a8e93" stroke-width=".4"/><circle cx="45.0" cy="21.0" r="0.9" fill="#c9ccd0" stroke="#8a8e93" stroke-width=".4"/><circle cx="4.4" cy="25.5" r="0.9" fill="#c9ccd0" stroke="#8a8e93" stroke-width=".4"/><circle cx="47.6" cy="25.5" r="0.9" fill="#c9ccd0" stroke="#8a8e93" stroke-width=".4"/><circle cx="7.0" cy="23.9" r="1.3" fill="#4a4e54"/><circle cx="11.8" cy="28.1" r="1.3" fill="#4a4e54"/><circle cx="16.5" cy="23.9" r="1.3" fill="#4a4e54"/><circle cx="21.2" cy="28.1" r="1.3" fill="#4a4e54"/><circle cx="26.0" cy="23.9" r="1.3" fill="#4a4e54"/><circle cx="30.8" cy="28.1" r="1.3" fill="#4a4e54"/><circle cx="35.5" cy="23.9" r="1.3" fill="#4a4e54"/><circle cx="40.2" cy="28.1" r="1.3" fill="#4a4e54"/><circle cx="45.0" cy="23.9" r="1.3" fill="#4a4e54"/></svg>
<span class="t " style="left:1408.8px;top:346.5px;font-size:12px;color:#fff;letter-spacing:-0.14px;">nonane</span>
<svg class="b" style="left:1474px;top:292px;" width="52" height="52" viewBox="0 0 52 52"><rect width="52" height="52" fill="#fff"/><line x1="7.0" y1="23.7" x2="7.0" y2="20.5" stroke="#8d9196" stroke-width="0.8"/><line x1="12.4" y1="28.3" x2="12.4" y2="31.5" stroke="#8d9196" stroke-width="0.8"/><line x1="17.9" y1="23.7" x2="17.9" y2="20.5" stroke="#8d9196" stroke-width="0.8"/><line x1="23.3" y1="28.3" x2="23.3" y2="31.5" stroke="#8d9196" stroke-width="0.8"/><line x1="28.7" y1="23.7" x2="28.7" y2="20.5" stroke="#8d9196" stroke-width="0.8"/><line x1="34.1" y1="28.3" x2="34.1" y2="31.5" stroke="#8d9196" stroke-width="0.8"/><line x1="39.6" y1="23.7" x2="39.6" y2="20.5" stroke="#8d9196" stroke-width="0.8"/><line x1="45.0" y1="28.3" x2="45.0" y2="31.5" stroke="#8d9196" stroke-width="0.8"/><line x1="7.0" y1="23.7" x2="4.1" y2="25.5" stroke="#8d9196" stroke-width="0.8"/><line x1="45.0" y1="28.3" x2="47.9" y2="26.5" stroke="#8d9196" stroke-width="0.8"/><polyline points="7.0,23.7 12.4,28.3 17.9,23.7 23.3,28.3 28.7,23.7 34.1,28.3 39.6,23.7 45.0,28.3" fill="none" stroke="#3f4348" stroke-width="1"/><circle cx="7.0" cy="20.5" r="1" fill="#c9ccd0" stroke="#8a8e93" stroke-width=".4"/><circle cx="12.4" cy="31.5" r="1" fill="#c9ccd0" stroke="#8a8e93" stroke-width=".4"/><circle cx="17.9" cy="20.5" r="1" fill="#c9ccd0" stroke="#8a8e93" stroke-width=".4"/><circle cx="23.3" cy="31.5" r="1" fill="#c9ccd0" stroke="#8a8e93" stroke-width=".4"/><circle cx="28.7" cy="20.5" r="1" fill="#c9ccd0" stroke="#8a8e93" stroke-width=".4"/><circle cx="34.1" cy="31.5" r="1" fill="#c9ccd0" stroke="#8a8e93" stroke-width=".4"/><circle cx="39.6" cy="20.5" r="1" fill="#c9ccd0" stroke="#8a8e93" stroke-width=".4"/><circle cx="45.0" cy="31.5" r="1" fill="#c9ccd0" stroke="#8a8e93" stroke-width=".4"/><circle cx="4.1" cy="25.5" r="1" fill="#c9ccd0" stroke="#8a8e93" stroke-width=".4"/><circle cx="47.9" cy="26.5" r="1" fill="#c9ccd0" stroke="#8a8e93" stroke-width=".4"/><circle cx="7.0" cy="23.7" r="1.4" fill="#4a4e54"/><circle cx="12.4" cy="28.3" r="1.4" fill="#4a4e54"/><circle cx="17.9" cy="23.7" r="1.4" fill="#4a4e54"/><circle cx="23.3" cy="28.3" r="1.4" fill="#4a4e54"/><circle cx="28.7" cy="23.7" r="1.4" fill="#4a4e54"/><circle cx="34.1" cy="28.3" r="1.4" fill="#4a4e54"/><circle cx="39.6" cy="23.7" r="1.4" fill="#4a4e54"/><circle cx="45.0" cy="28.3" r="1.4" fill="#4a4e54"/></svg>
<span class="t " style="left:1482.4px;top:346.5px;font-size:12px;color:#fff;letter-spacing:-0.05px;">octane</span>
<svg class="b" style="left:1114px;top:364px;" width="52" height="52" viewBox="0 0 52 52"><rect width="52" height="52" fill="#fff"/><line x1="7.0" y1="24.6" x2="7.0" y2="22.8" stroke="#8d9196" stroke-width="0.56"/><line x1="9.7" y1="27.4" x2="9.7" y2="29.2" stroke="#8d9196" stroke-width="0.56"/><line x1="12.4" y1="24.6" x2="12.4" y2="22.8" stroke="#8d9196" stroke-width="0.56"/><line x1="15.1" y1="27.4" x2="15.1" y2="29.2" stroke="#8d9196" stroke-width="0.56"/><line x1="17.9" y1="24.6" x2="17.9" y2="22.8" stroke="#8d9196" stroke-width="0.56"/><line x1="20.6" y1="27.4" x2="20.6" y2="29.2" stroke="#8d9196" stroke-width="0.56"/><line x1="23.3" y1="24.6" x2="23.3" y2="22.8" stroke="#8d9196" stroke-width="0.56"/><line x1="26.0" y1="27.4" x2="26.0" y2="29.2" stroke="#8d9196" stroke-width="0.56"/><line x1="28.7" y1="24.6" x2="28.7" y2="22.8" stroke="#8d9196" stroke-width="0.56"/><line x1="31.4" y1="27.4" x2="31.4" y2="29.2" stroke="#8d9196" stroke-width="0.56"/><line x1="34.1" y1="24.6" x2="34.1" y2="22.8" stroke="#8d9196" stroke-width="0.56"/><line x1="36.9" y1="27.4" x2="36.9" y2="29.2" stroke="#8d9196" stroke-width="0.56"/><line x1="39.6" y1="24.6" x2="39.6" y2="22.8" stroke="#8d9196" stroke-width="0.56"/><line x1="42.3" y1="27.4" x2="42.3" y2="29.2" stroke="#8d9196" stroke-width="0.56"/><line x1="45.0" y1="24.6" x2="45.0" y2="22.8" stroke="#8d9196" stroke-width="0.56"/><line x1="7.0" y1="24.6" x2="5.4" y2="25.6" stroke="#8d9196" stroke-width="0.56"/><line x1="45.0" y1="24.6" x2="46.6" y2="25.6" stroke="#8d9196" stroke-width="0.56"/><polyline points="7.0,24.6 9.7,27.4 12.4,24.6 15.1,27.4 17.9,24.6 20.6,27.4 23.3,24.6 26.0,27.4 28.7,24.6 31.4,27.4 34.1,24.6 36.9,27.4 39.6,24.6 42.3,27.4 45.0,24.6" fill="none" stroke="#3f4348" stroke-width="0.7"/><circle cx="7.0" cy="22.8" r="0.55" fill="#c9ccd0" stroke="#8a8e93" stroke-width=".4"/><circle cx="9.7" cy="29.2" r="0.55" fill="#c9ccd0" stroke="#8a8e93" stroke-width=".4"/><circle cx="12.4" cy="22.8" r="0.55" fill="#c9ccd0" stroke="#8a8e93" stroke-width=".4"/><circle cx="15.1" cy="29.2" r="0.55" fill="#c9ccd0" stroke="#8a8e93" stroke-width=".4"/><circle cx="17.9" cy="22.8" r="0.55" fill="#c9ccd0" stroke="#8a8e93" stroke-width=".4"/><circle cx="20.6" cy="29.2" r="0.55" fill="#c9ccd0" stroke="#8a8e93" stroke-width=".4"/><circle cx="23.3" cy="22.8" r="0.55" fill="#c9ccd0" stroke="#8a8e93" stroke-width=".4"/><circle cx="26.0" cy="29.2" r="0.55" fill="#c9ccd0" stroke="#8a8e93" stroke-width=".4"/><circle cx="28.7" cy="22.8" r="0.55" fill="#c9ccd0" stroke="#8a8e93" stroke-width=".4"/><circle cx="31.4" cy="29.2" r="0.55" fill="#c9ccd0" stroke="#8a8e93" stroke-width=".4"/><circle cx="34.1" cy="22.8" r="0.55" fill="#c9ccd0" stroke="#8a8e93" stroke-width=".4"/><circle cx="36.9" cy="29.2" r="0.55" fill="#c9ccd0" stroke="#8a8e93" stroke-width=".4"/><circle cx="39.6" cy="22.8" r="0.55" fill="#c9ccd0" stroke="#8a8e93" stroke-width=".4"/><circle cx="42.3" cy="29.2" r="0.55" fill="#c9ccd0" stroke="#8a8e93" stroke-width=".4"/><circle cx="45.0" cy="22.8" r="0.55" fill="#c9ccd0" stroke="#8a8e93" stroke-width=".4"/><circle cx="5.4" cy="25.6" r="0.55" fill="#c9ccd0" stroke="#8a8e93" stroke-width=".4"/><circle cx="46.6" cy="25.6" r="0.55" fill="#c9ccd0" stroke="#8a8e93" stroke-width=".4"/><circle cx="7.0" cy="24.6" r="0.95" fill="#4a4e54"/><circle cx="9.7" cy="27.4" r="0.95" fill="#4a4e54"/><circle cx="12.4" cy="24.6" r="0.95" fill="#4a4e54"/><circle cx="15.1" cy="27.4" r="0.95" fill="#4a4e54"/><circle cx="17.9" cy="24.6" r="0.95" fill="#4a4e54"/><circle cx="20.6" cy="27.4" r="0.95" fill="#4a4e54"/><circle cx="23.3" cy="24.6" r="0.95" fill="#4a4e54"/><circle cx="26.0" cy="27.4" r="0.95" fill="#4a4e54"/><circle cx="28.7" cy="24.6" r="0.95" fill="#4a4e54"/><circle cx="31.4" cy="27.4" r="0.95" fill="#4a4e54"/><circle cx="34.1" cy="24.6" r="0.95" fill="#4a4e54"/><circle cx="36.9" cy="27.4" r="0.95" fill="#4a4e54"/><circle cx="39.6" cy="24.6" r="0.95" fill="#4a4e54"/><circle cx="42.3" cy="27.4" r="0.95" fill="#4a4e54"/><circle cx="45.0" cy="24.6" r="0.95" fill="#4a4e54"/></svg>
<span class="t " style="left:1108.2px;top:418.5px;font-size:12px;color:#fff;letter-spacing:-0.20px;">pentadeca...</span>
<svg class="b" style="left:1186px;top:364px;" width="52" height="52" viewBox="0 0 52 52"><rect width="52" height="52" fill="#fff"/><line x1="9.0" y1="22.7" x2="9.0" y2="17.5" stroke="#8d9196" stroke-width="1.12"/><line x1="17.5" y1="29.3" x2="17.5" y2="34.5" stroke="#8d9196" stroke-width="1.12"/><line x1="26.0" y1="22.7" x2="26.0" y2="17.5" stroke="#8d9196" stroke-width="1.12"/><line x1="34.5" y1="29.3" x2="34.5" y2="34.5" stroke="#8d9196" stroke-width="1.12"/><line x1="43.0" y1="22.7" x2="43.0" y2="17.5" stroke="#8d9196" stroke-width="1.12"/><line x1="9.0" y1="22.7" x2="4.3" y2="25.6" stroke="#8d9196" stroke-width="1.12"/><line x1="43.0" y1="22.7" x2="47.7" y2="25.6" stroke="#8d9196" stroke-width="1.12"/><polyline points="9.0,22.7 17.5,29.3 26.0,22.7 34.5,29.3 43.0,22.7" fill="none" stroke="#3f4348" stroke-width="1.4"/><circle cx="9.0" cy="17.5" r="1.7" fill="#c9ccd0" stroke="#8a8e93" stroke-width=".4"/><circle cx="17.5" cy="34.5" r="1.7" fill="#c9ccd0" stroke="#8a8e93" stroke-width=".4"/><circle cx="26.0" cy="17.5" r="1.7" fill="#c9ccd0" stroke="#8a8e93" stroke-width=".4"/><circle cx="34.5" cy="34.5" r="1.7" fill="#c9ccd0" stroke="#8a8e93" stroke-width=".4"/><circle cx="43.0" cy="17.5" r="1.7" fill="#c9ccd0" stroke="#8a8e93" stroke-width=".4"/><circle cx="4.3" cy="25.6" r="1.7" fill="#c9ccd0" stroke="#8a8e93" stroke-width=".4"/><circle cx="47.7" cy="25.6" r="1.7" fill="#c9ccd0" stroke="#8a8e93" stroke-width=".4"/><circle cx="9.0" cy="22.7" r="2.1" fill="#4a4e54"/><circle cx="17.5" cy="29.3" r="2.1" fill="#4a4e54"/><circle cx="26.0" cy="22.7" r="2.1" fill="#4a4e54"/><circle cx="34.5" cy="29.3" r="2.1" fill="#4a4e54"/><circle cx="43.0" cy="22.7" r="2.1" fill="#4a4e54"/></svg>
<span class="t " style="left:1191.4px;top:418.5px;font-size:12px;color:#fff;letter-spacing:-0.11px;">pentane</span>
<svg class="b" style="left:1258px;top:364px;" width="52" height="52" viewBox="0 0 52 52"><rect width="52" height="52" fill="#fff"/><line x1="13" y1="29" x2="26" y2="21" stroke="#45494f" stroke-width="2"/><line x1="26" y1="21" x2="39" y2="29" stroke="#45494f" stroke-width="2"/><line x1="13" y1="29" x2="4.5" y2="24" stroke="#45494f" stroke-width="2"/><line x1="13" y1="29" x2="13.5" y2="37" stroke="#45494f" stroke-width="2"/><line x1="13" y1="29" x2="10" y2="35" stroke="#45494f" stroke-width="2"/><line x1="26" y1="21" x2="26" y2="14" stroke="#45494f" stroke-width="2"/><line x1="39" y1="29" x2="47.5" y2="24" stroke="#45494f" stroke-width="2"/><line x1="39" y1="29" x2="39" y2="37" stroke="#45494f" stroke-width="2"/><line x1="39" y1="29" x2="42" y2="35" stroke="#45494f" stroke-width="2"/><circle cx="13" cy="29" r="3" fill="#4a4e54"/><circle cx="26" cy="21" r="3" fill="#4a4e54"/><circle cx="39" cy="29" r="3" fill="#4a4e54"/><circle cx="4.5" cy="24" r="2.6" fill="#cfd2d5" stroke="#85898e" stroke-width=".5"/><circle cx="13.5" cy="37" r="2.6" fill="#cfd2d5" stroke="#85898e" stroke-width=".5"/><circle cx="10" cy="35" r="2" fill="#cfd2d5" stroke="#85898e" stroke-width=".5"/><circle cx="26" cy="14" r="2.6" fill="#cfd2d5" stroke="#85898e" stroke-width=".5"/><circle cx="47.5" cy="24" r="2.6" fill="#cfd2d5" stroke="#85898e" stroke-width=".5"/><circle cx="39" cy="37" r="2.6" fill="#cfd2d5" stroke="#85898e" stroke-width=".5"/><circle cx="42" cy="35" r="2" fill="#cfd2d5" stroke="#85898e" stroke-width=".5"/></svg>
<span class="t " style="left:1262.5px;top:418.5px;font-size:12px;color:#fff;letter-spacing:-0.06px;">propane</span>
<svg class="b" style="left:1330px;top:364px;" width="52" height="52" viewBox="0 0 52 52"><rect width="52" height="52" fill="#fff"/><line x1="6.5" y1="25.1" x2="6.5" y2="23.9" stroke="#8d9196" stroke-width="0.44"/><line x1="8.2" y1="26.9" x2="8.2" y2="28.1" stroke="#8d9196" stroke-width="0.44"/><line x1="9.9" y1="25.1" x2="9.9" y2="23.9" stroke="#8d9196" stroke-width="0.44"/><line x1="11.6" y1="26.9" x2="11.6" y2="28.1" stroke="#8d9196" stroke-width="0.44"/><line x1="13.3" y1="25.1" x2="13.3" y2="23.9" stroke="#8d9196" stroke-width="0.44"/><line x1="15.0" y1="26.9" x2="15.0" y2="28.1" stroke="#8d9196" stroke-width="0.44"/><line x1="16.7" y1="25.1" x2="16.7" y2="23.9" stroke="#8d9196" stroke-width="0.44"/><line x1="18.4" y1="26.9" x2="18.4" y2="28.1" stroke="#8d9196" stroke-width="0.44"/><line x1="20.1" y1="25.1" x2="20.1" y2="23.9" stroke="#8d9196" stroke-width="0.44"/><line x1="21.8" y1="26.9" x2="21.8" y2="28.1" stroke="#8d9196" stroke-width="0.44"/><line x1="23.5" y1="25.1" x2="23.5" y2="23.9" stroke="#8d9196" stroke-width="0.44"/><line x1="25.2" y1="26.9" x2="25.2" y2="28.1" stroke="#8d9196" stroke-width="0.44"/><line x1="26.8" y1="25.1" x2="26.8" y2="23.9" stroke="#8d9196" stroke-width="0.44"/><line x1="28.5" y1="26.9" x2="28.5" y2="28.1" stroke="#8d9196" stroke-width="0.44"/><line x1="30.2" y1="25.1" x2="30.2" y2="23.9" stroke="#8d9196" stroke-width="0.44"/><line x1="31.9" y1="26.9" x2="31.9" y2="28.1" stroke="#8d9196" stroke-width="0.44"/><line x1="33.6" y1="25.1" x2="33.6" y2="23.9" stroke="#8d9196" stroke-width="0.44"/><line x1="35.3" y1="26.9" x2="35.3" y2="28.1" stroke="#8d9196" stroke-width="0.44"/><line x1="37.0" y1="25.1" x2="37.0" y2="23.9" stroke="#8d9196" stroke-width="0.44"/><line x1="38.7" y1="26.9" x2="38.7" y2="28.1" stroke="#8d9196" stroke-width="0.44"/><line x1="40.4" y1="25.1" x2="40.4" y2="23.9" stroke="#8d9196" stroke-width="0.44"/><line x1="42.1" y1="26.9" x2="42.1" y2="28.1" stroke="#8d9196" stroke-width="0.44"/><line x1="43.8" y1="25.1" x2="43.8" y2="23.9" stroke="#8d9196" stroke-width="0.44"/><line x1="45.5" y1="26.9" x2="45.5" y2="28.1" stroke="#8d9196" stroke-width="0.44"/><line x1="6.5" y1="25.1" x2="5.4" y2="25.8" stroke="#8d9196" stroke-width="0.44"/><line x1="45.5" y1="26.9" x2="46.6" y2="26.2" stroke="#8d9196" stroke-width="0.44"/><polyline points="6.5,25.1 8.2,26.9 9.9,25.1 11.6,26.9 13.3,25.1 15.0,26.9 16.7,25.1 18.4,26.9 20.1,25.1 21.8,26.9 23.5,25.1 25.2,26.9 26.8,25.1 28.5,26.9 30.2,25.1 31.9,26.9 33.6,25.1 35.3,26.9 37.0,25.1 38.7,26.9 40.4,25.1 42.1,26.9 43.8,25.1 45.5,26.9" fill="none" stroke="#3f4348" stroke-width="0.55"/><circle cx="6.5" cy="23.9" r="0.35" fill="#c9ccd0" stroke="#8a8e93" stroke-width=".4"/><circle cx="8.2" cy="28.1" r="0.35" fill="#c9ccd0" stroke="#8a8e93" stroke-width=".4"/><circle cx="9.9" cy="23.9" r="0.35" fill="#c9ccd0" stroke="#8a8e93" stroke-width=".4"/><circle cx="11.6" cy="28.1" r="0.35" fill="#c9ccd0" stroke="#8a8e93" stroke-width=".4"/><circle cx="13.3" cy="23.9" r="0.35" fill="#c9ccd0" stroke="#8a8e93" stroke-width=".4"/><circle cx="15.0" cy="28.1" r="0.35" fill="#c9ccd0" stroke="#8a8e93" stroke-width=".4"/><circle cx="16.7" cy="23.9" r="0.35" fill="#c9ccd0" stroke="#8a8e93" stroke-width=".4"/><circle cx="18.4" cy="28.1" r="0.35" fill="#c9ccd0" stroke="#8a8e93" stroke-width=".4"/><circle cx="20.1" cy="23.9" r="0.35" fill="#c9ccd0" stroke="#8a8e93" stroke-width=".4"/><circle cx="21.8" cy="28.1" r="0.35" fill="#c9ccd0" stroke="#8a8e93" stroke-width=".4"/><circle cx="23.5" cy="23.9" r="0.35" fill="#c9ccd0" stroke="#8a8e93" stroke-width=".4"/><circle cx="25.2" cy="28.1" r="0.35" fill="#c9ccd0" stroke="#8a8e93" stroke-width=".4"/><circle cx="26.8" cy="23.9" r="0.35" fill="#c9ccd0" stroke="#8a8e93" stroke-width=".4"/><circle cx="28.5" cy="28.1" r="0.35" fill="#c9ccd0" stroke="#8a8e93" stroke-width=".4"/><circle cx="30.2" cy="23.9" r="0.35" fill="#c9ccd0" stroke="#8a8e93" stroke-width=".4"/><circle cx="31.9" cy="28.1" r="0.35" fill="#c9ccd0" stroke="#8a8e93" stroke-width=".4"/><circle cx="33.6" cy="23.9" r="0.35" fill="#c9ccd0" stroke="#8a8e93" stroke-width=".4"/><circle cx="35.3" cy="28.1" r="0.35" fill="#c9ccd0" stroke="#8a8e93" stroke-width=".4"/><circle cx="37.0" cy="23.9" r="0.35" fill="#c9ccd0" stroke="#8a8e93" stroke-width=".4"/><circle cx="38.7" cy="28.1" r="0.35" fill="#c9ccd0" stroke="#8a8e93" stroke-width=".4"/><circle cx="40.4" cy="23.9" r="0.35" fill="#c9ccd0" stroke="#8a8e93" stroke-width=".4"/><circle cx="42.1" cy="28.1" r="0.35" fill="#c9ccd0" stroke="#8a8e93" stroke-width=".4"/><circle cx="43.8" cy="23.9" r="0.35" fill="#c9ccd0" stroke="#8a8e93" stroke-width=".4"/><circle cx="45.5" cy="28.1" r="0.35" fill="#c9ccd0" stroke="#8a8e93" stroke-width=".4"/><circle cx="5.4" cy="25.8" r="0.35" fill="#c9ccd0" stroke="#8a8e93" stroke-width=".4"/><circle cx="46.6" cy="26.2" r="0.35" fill="#c9ccd0" stroke="#8a8e93" stroke-width=".4"/><circle cx="6.5" cy="25.1" r="0.65" fill="#4a4e54"/><circle cx="8.2" cy="26.9" r="0.65" fill="#4a4e54"/><circle cx="9.9" cy="25.1" r="0.65" fill="#4a4e54"/><circle cx="11.6" cy="26.9" r="0.65" fill="#4a4e54"/><circle cx="13.3" cy="25.1" r="0.65" fill="#4a4e54"/><circle cx="15.0" cy="26.9" r="0.65" fill="#4a4e54"/><circle cx="16.7" cy="25.1" r="0.65" fill="#4a4e54"/><circle cx="18.4" cy="26.9" r="0.65" fill="#4a4e54"/><circle cx="20.1" cy="25.1" r="0.65" fill="#4a4e54"/><circle cx="21.8" cy="26.9" r="0.65" fill="#4a4e54"/><circle cx="23.5" cy="25.1" r="0.65" fill="#4a4e54"/><circle cx="25.2" cy="26.9" r="0.65" fill="#4a4e54"/><circle cx="26.8" cy="25.1" r="0.65" fill="#4a4e54"/><circle cx="28.5" cy="26.9" r="0.65" fill="#4a4e54"/><circle cx="30.2" cy="25.1" r="0.65" fill="#4a4e54"/><circle cx="31.9" cy="26.9" r="0.65" fill="#4a4e54"/><circle cx="33.6" cy="25.1" r="0.65" fill="#4a4e54"/><circle cx="35.3" cy="26.9" r="0.65" fill="#4a4e54"/><circle cx="37.0" cy="25.1" r="0.65" fill="#4a4e54"/><circle cx="38.7" cy="26.9" r="0.65" fill="#4a4e54"/><circle cx="40.4" cy="25.1" r="0.65" fill="#4a4e54"/><circle cx="42.1" cy="26.9" r="0.65" fill="#4a4e54"/><circle cx="43.8" cy="25.1" r="0.65" fill="#4a4e54"/><circle cx="45.5" cy="26.9" r="0.65" fill="#4a4e54"/></svg>
<span class="t " style="left:1326.2px;top:418.5px;font-size:12px;color:#fff;letter-spacing:-0.14px;">tetracosane</span>
<svg class="b" style="left:1402px;top:364px;" width="52" height="52" viewBox="0 0 52 52"><rect width="52" height="52" fill="#fff"/><line x1="7.0" y1="24.5" x2="7.0" y2="22.5" stroke="#8d9196" stroke-width="0.6"/><line x1="9.9" y1="27.5" x2="9.9" y2="29.5" stroke="#8d9196" stroke-width="0.6"/><line x1="12.8" y1="24.5" x2="12.8" y2="22.5" stroke="#8d9196" stroke-width="0.6"/><line x1="15.8" y1="27.5" x2="15.8" y2="29.5" stroke="#8d9196" stroke-width="0.6"/><line x1="18.7" y1="24.5" x2="18.7" y2="22.5" stroke="#8d9196" stroke-width="0.6"/><line x1="21.6" y1="27.5" x2="21.6" y2="29.5" stroke="#8d9196" stroke-width="0.6"/><line x1="24.5" y1="24.5" x2="24.5" y2="22.5" stroke="#8d9196" stroke-width="0.6"/><line x1="27.5" y1="27.5" x2="27.5" y2="29.5" stroke="#8d9196" stroke-width="0.6"/><line x1="30.4" y1="24.5" x2="30.4" y2="22.5" stroke="#8d9196" stroke-width="0.6"/><line x1="33.3" y1="27.5" x2="33.3" y2="29.5" stroke="#8d9196" stroke-width="0.6"/><line x1="36.2" y1="24.5" x2="36.2" y2="22.5" stroke="#8d9196" stroke-width="0.6"/><line x1="39.2" y1="27.5" x2="39.2" y2="29.5" stroke="#8d9196" stroke-width="0.6"/><line x1="42.1" y1="24.5" x2="42.1" y2="22.5" stroke="#8d9196" stroke-width="0.6"/><line x1="45.0" y1="27.5" x2="45.0" y2="29.5" stroke="#8d9196" stroke-width="0.6"/><line x1="7.0" y1="24.5" x2="5.2" y2="25.6" stroke="#8d9196" stroke-width="0.6"/><line x1="45.0" y1="27.5" x2="46.8" y2="26.4" stroke="#8d9196" stroke-width="0.6"/><polyline points="7.0,24.5 9.9,27.5 12.8,24.5 15.8,27.5 18.7,24.5 21.6,27.5 24.5,24.5 27.5,27.5 30.4,24.5 33.3,27.5 36.2,24.5 39.2,27.5 42.1,24.5 45.0,27.5" fill="none" stroke="#3f4348" stroke-width="0.75"/><circle cx="7.0" cy="22.5" r="0.6" fill="#c9ccd0" stroke="#8a8e93" stroke-width=".4"/><circle cx="9.9" cy="29.5" r="0.6" fill="#c9ccd0" stroke="#8a8e93" stroke-width=".4"/><circle cx="12.8" cy="22.5" r="0.6" fill="#c9ccd0" stroke="#8a8e93" stroke-width=".4"/><circle cx="15.8" cy="29.5" r="0.6" fill="#c9ccd0" stroke="#8a8e93" stroke-width=".4"/><circle cx="18.7" cy="22.5" r="0.6" fill="#c9ccd0" stroke="#8a8e93" stroke-width=".4"/><circle cx="21.6" cy="29.5" r="0.6" fill="#c9ccd0" stroke="#8a8e93" stroke-width=".4"/><circle cx="24.5" cy="22.5" r="0.6" fill="#c9ccd0" stroke="#8a8e93" stroke-width=".4"/><circle cx="27.5" cy="29.5" r="0.6" fill="#c9ccd0" stroke="#8a8e93" stroke-width=".4"/><circle cx="30.4" cy="22.5" r="0.6" fill="#c9ccd0" stroke="#8a8e93" stroke-width=".4"/><circle cx="33.3" cy="29.5" r="0.6" fill="#c9ccd0" stroke="#8a8e93" stroke-width=".4"/><circle cx="36.2" cy="22.5" r="0.6" fill="#c9ccd0" stroke="#8a8e93" stroke-width=".4"/><circle cx="39.2" cy="29.5" r="0.6" fill="#c9ccd0" stroke="#8a8e93" stroke-width=".4"/><circle cx="42.1" cy="22.5" r="0.6" fill="#c9ccd0" stroke="#8a8e93" stroke-width=".4"/><circle cx="45.0" cy="29.5" r="0.6" fill="#c9ccd0" stroke="#8a8e93" stroke-width=".4"/><circle cx="5.2" cy="25.6" r="0.6" fill="#c9ccd0" stroke="#8a8e93" stroke-width=".4"/><circle cx="46.8" cy="26.4" r="0.6" fill="#c9ccd0" stroke="#8a8e93" stroke-width=".4"/><circle cx="7.0" cy="24.5" r="1" fill="#4a4e54"/><circle cx="9.9" cy="27.5" r="1" fill="#4a4e54"/><circle cx="12.8" cy="24.5" r="1" fill="#4a4e54"/><circle cx="15.8" cy="27.5" r="1" fill="#4a4e54"/><circle cx="18.7" cy="24.5" r="1" fill="#4a4e54"/><circle cx="21.6" cy="27.5" r="1" fill="#4a4e54"/><circle cx="24.5" cy="24.5" r="1" fill="#4a4e54"/><circle cx="27.5" cy="27.5" r="1" fill="#4a4e54"/><circle cx="30.4" cy="24.5" r="1" fill="#4a4e54"/><circle cx="33.3" cy="27.5" r="1" fill="#4a4e54"/><circle cx="36.2" cy="24.5" r="1" fill="#4a4e54"/><circle cx="39.2" cy="27.5" r="1" fill="#4a4e54"/><circle cx="42.1" cy="24.5" r="1" fill="#4a4e54"/><circle cx="45.0" cy="27.5" r="1" fill="#4a4e54"/></svg>
<span class="t " style="left:1397px;top:418.5px;font-size:12px;color:#fff;letter-spacing:-0.12px;">tetradecane</span>
<svg class="b" style="left:1474px;top:364px;" width="52" height="52" viewBox="0 0 52 52"><rect width="52" height="52" fill="#fff"/><line x1="7.0" y1="24.4" x2="7.0" y2="22.3" stroke="#8d9196" stroke-width="0.64"/><line x1="10.2" y1="27.6" x2="10.2" y2="29.7" stroke="#8d9196" stroke-width="0.64"/><line x1="13.3" y1="24.4" x2="13.3" y2="22.3" stroke="#8d9196" stroke-width="0.64"/><line x1="16.5" y1="27.6" x2="16.5" y2="29.7" stroke="#8d9196" stroke-width="0.64"/><line x1="19.7" y1="24.4" x2="19.7" y2="22.3" stroke="#8d9196" stroke-width="0.64"/><line x1="22.8" y1="27.6" x2="22.8" y2="29.7" stroke="#8d9196" stroke-width="0.64"/><line x1="26.0" y1="24.4" x2="26.0" y2="22.3" stroke="#8d9196" stroke-width="0.64"/><line x1="29.2" y1="27.6" x2="29.2" y2="29.7" stroke="#8d9196" stroke-width="0.64"/><line x1="32.3" y1="24.4" x2="32.3" y2="22.3" stroke="#8d9196" stroke-width="0.64"/><line x1="35.5" y1="27.6" x2="35.5" y2="29.7" stroke="#8d9196" stroke-width="0.64"/><line x1="38.7" y1="24.4" x2="38.7" y2="22.3" stroke="#8d9196" stroke-width="0.64"/><line x1="41.8" y1="27.6" x2="41.8" y2="29.7" stroke="#8d9196" stroke-width="0.64"/><line x1="45.0" y1="24.4" x2="45.0" y2="22.3" stroke="#8d9196" stroke-width="0.64"/><line x1="7.0" y1="24.4" x2="5.1" y2="25.6" stroke="#8d9196" stroke-width="0.64"/><line x1="45.0" y1="24.4" x2="46.9" y2="25.6" stroke="#8d9196" stroke-width="0.64"/><polyline points="7.0,24.4 10.2,27.6 13.3,24.4 16.5,27.6 19.7,24.4 22.8,27.6 26.0,24.4 29.2,27.6 32.3,24.4 35.5,27.6 38.7,24.4 41.8,27.6 45.0,24.4" fill="none" stroke="#3f4348" stroke-width="0.8"/><circle cx="7.0" cy="22.3" r="0.65" fill="#c9ccd0" stroke="#8a8e93" stroke-width=".4"/><circle cx="10.2" cy="29.7" r="0.65" fill="#c9ccd0" stroke="#8a8e93" stroke-width=".4"/><circle cx="13.3" cy="22.3" r="0.65" fill="#c9ccd0" stroke="#8a8e93" stroke-width=".4"/><circle cx="16.5" cy="29.7" r="0.65" fill="#c9ccd0" stroke="#8a8e93" stroke-width=".4"/><circle cx="19.7" cy="22.3" r="0.65" fill="#c9ccd0" stroke="#8a8e93" stroke-width=".4"/><circle cx="22.8" cy="29.7" r="0.65" fill="#c9ccd0" stroke="#8a8e93" stroke-width=".4"/><circle cx="26.0" cy="22.3" r="0.65" fill="#c9ccd0" stroke="#8a8e93" stroke-width=".4"/><circle cx="29.2" cy="29.7" r="0.65" fill="#c9ccd0" stroke="#8a8e93" stroke-width=".4"/><circle cx="32.3" cy="22.3" r="0.65" fill="#c9ccd0" stroke="#8a8e93" stroke-width=".4"/><circle cx="35.5" cy="29.7" r="0.65" fill="#c9ccd0" stroke="#8a8e93" stroke-width=".4"/><circle cx="38.7" cy="22.3" r="0.65" fill="#c9ccd0" stroke="#8a8e93" stroke-width=".4"/><circle cx="41.8" cy="29.7" r="0.65" fill="#c9ccd0" stroke="#8a8e93" stroke-width=".4"/><circle cx="45.0" cy="22.3" r="0.65" fill="#c9ccd0" stroke="#8a8e93" stroke-width=".4"/><circle cx="5.1" cy="25.6" r="0.65" fill="#c9ccd0" stroke="#8a8e93" stroke-width=".4"/><circle cx="46.9" cy="25.6" r="0.65" fill="#c9ccd0" stroke="#8a8e93" stroke-width=".4"/><circle cx="7.0" cy="24.4" r="1.05" fill="#4a4e54"/><circle cx="10.2" cy="27.6" r="1.05" fill="#4a4e54"/><circle cx="13.3" cy="24.4" r="1.05" fill="#4a4e54"/><circle cx="16.5" cy="27.6" r="1.05" fill="#4a4e54"/><circle cx="19.7" cy="24.4" r="1.05" fill="#4a4e54"/><circle cx="22.8" cy="27.6" r="1.05" fill="#4a4e54"/><circle cx="26.0" cy="24.4" r="1.05" fill="#4a4e54"/><circle cx="29.2" cy="27.6" r="1.05" fill="#4a4e54"/><circle cx="32.3" cy="24.4" r="1.05" fill="#4a4e54"/><circle cx="35.5" cy="27.6" r="1.05" fill="#4a4e54"/><circle cx="38.7" cy="24.4" r="1.05" fill="#4a4e54"/><circle cx="41.8" cy="27.6" r="1.05" fill="#4a4e54"/><circle cx="45.0" cy="24.4" r="1.05" fill="#4a4e54"/></svg>
<span class="t " style="left:1476px;top:418.5px;font-size:12px;color:#fff;letter-spacing:-0.03px;">tridecane</span>
<svg class="b" style="left:1114px;top:436px;" width="52" height="52" viewBox="0 0 52 52"><rect width="52" height="52" fill="#fff"/><line x1="7.0" y1="24.2" x2="7.0" y2="21.8" stroke="#8d9196" stroke-width="0.68"/><line x1="10.8" y1="27.8" x2="10.8" y2="30.2" stroke="#8d9196" stroke-width="0.68"/><line x1="14.6" y1="24.2" x2="14.6" y2="21.8" stroke="#8d9196" stroke-width="0.68"/><line x1="18.4" y1="27.8" x2="18.4" y2="30.2" stroke="#8d9196" stroke-width="0.68"/><line x1="22.2" y1="24.2" x2="22.2" y2="21.8" stroke="#8d9196" stroke-width="0.68"/><line x1="26.0" y1="27.8" x2="26.0" y2="30.2" stroke="#8d9196" stroke-width="0.68"/><line x1="29.8" y1="24.2" x2="29.8" y2="21.8" stroke="#8d9196" stroke-width="0.68"/><line x1="33.6" y1="27.8" x2="33.6" y2="30.2" stroke="#8d9196" stroke-width="0.68"/><line x1="37.4" y1="24.2" x2="37.4" y2="21.8" stroke="#8d9196" stroke-width="0.68"/><line x1="41.2" y1="27.8" x2="41.2" y2="30.2" stroke="#8d9196" stroke-width="0.68"/><line x1="45.0" y1="24.2" x2="45.0" y2="21.8" stroke="#8d9196" stroke-width="0.68"/><line x1="7.0" y1="24.2" x2="4.8" y2="25.5" stroke="#8d9196" stroke-width="0.68"/><line x1="45.0" y1="24.2" x2="47.2" y2="25.5" stroke="#8d9196" stroke-width="0.68"/><polyline points="7.0,24.2 10.8,27.8 14.6,24.2 18.4,27.8 22.2,24.2 26.0,27.8 29.8,24.2 33.6,27.8 37.4,24.2 41.2,27.8 45.0,24.2" fill="none" stroke="#3f4348" stroke-width="0.85"/><circle cx="7.0" cy="21.8" r="0.75" fill="#c9ccd0" stroke="#8a8e93" stroke-width=".4"/><circle cx="10.8" cy="30.2" r="0.75" fill="#c9ccd0" stroke="#8a8e93" stroke-width=".4"/><circle cx="14.6" cy="21.8" r="0.75" fill="#c9ccd0" stroke="#8a8e93" stroke-width=".4"/><circle cx="18.4" cy="30.2" r="0.75" fill="#c9ccd0" stroke="#8a8e93" stroke-width=".4"/><circle cx="22.2" cy="21.8" r="0.75" fill="#c9ccd0" stroke="#8a8e93" stroke-width=".4"/><circle cx="26.0" cy="30.2" r="0.75" fill="#c9ccd0" stroke="#8a8e93" stroke-width=".4"/><circle cx="29.8" cy="21.8" r="0.75" fill="#c9ccd0" stroke="#8a8e93" stroke-width=".4"/><circle cx="33.6" cy="30.2" r="0.75" fill="#c9ccd0" stroke="#8a8e93" stroke-width=".4"/><circle cx="37.4" cy="21.8" r="0.75" fill="#c9ccd0" stroke="#8a8e93" stroke-width=".4"/><circle cx="41.2" cy="30.2" r="0.75" fill="#c9ccd0" stroke="#8a8e93" stroke-width=".4"/><circle cx="45.0" cy="21.8" r="0.75" fill="#c9ccd0" stroke="#8a8e93" stroke-width=".4"/><circle cx="4.8" cy="25.5" r="0.75" fill="#c9ccd0" stroke="#8a8e93" stroke-width=".4"/><circle cx="47.2" cy="25.5" r="0.75" fill="#c9ccd0" stroke="#8a8e93" stroke-width=".4"/><circle cx="7.0" cy="24.2" r="1.15" fill="#4a4e54"/><circle cx="10.8" cy="27.8" r="1.15" fill="#4a4e54"/><circle cx="14.6" cy="24.2" r="1.15" fill="#4a4e54"/><circle cx="18.4" cy="27.8" r="1.15" fill="#4a4e54"/><circle cx="22.2" cy="24.2" r="1.15" fill="#4a4e54"/><circle cx="26.0" cy="27.8" r="1.15" fill="#4a4e54"/><circle cx="29.8" cy="24.2" r="1.15" fill="#4a4e54"/><circle cx="33.6" cy="27.8" r="1.15" fill="#4a4e54"/><circle cx="37.4" cy="24.2" r="1.15" fill="#4a4e54"/><circle cx="41.2" cy="27.8" r="1.15" fill="#4a4e54"/><circle cx="45.0" cy="24.2" r="1.15" fill="#4a4e54"/></svg>
<span class="t " style="left:1114.5px;top:490.5px;font-size:12px;color:#fff;letter-spacing:-0.16px;">undecane</span>
<div class="b" style="left:1107.5px;top:829.5px;width:21px;height:21px;background:#a8c8ee;border-radius:3px;box-shadow:0 0 0 .5px #1b2431;"></div>
<span class="t " style="left:1113.67px;top:832.5px;font-size:12px;color:#000;letter-spacing:0.00px;font-weight:bold;">H</span>
<div class="b" style="left:1139.5px;top:829.5px;width:21px;height:21px;background:#a8c8ee;border-radius:3px;box-shadow:0 0 0 .5px #1b2431;"></div>
<span class="t " style="left:1145.67px;top:832.5px;font-size:12px;color:#000;letter-spacing:0.00px;font-weight:bold;">C</span>
<div class="b" style="left:1171.5px;top:829.5px;width:21px;height:21px;background:#a8c8ee;border-radius:3px;box-shadow:0 0 0 .5px #1b2431;"></div>
<span class="t " style="left:1177.67px;top:832.5px;font-size:12px;color:#000;letter-spacing:0.00px;font-weight:bold;">N</span>
<div class="b" style="left:1203.5px;top:829.5px;width:21px;height:21px;background:#a8c8ee;border-radius:3px;box-shadow:0 0 0 .5px #1b2431;"></div>
<span class="t " style="left:1209.33px;top:832.5px;font-size:12px;color:#000;letter-spacing:-0.00px;font-weight:bold;">O</span>
<svg class="b" style="left:1235px;top:830px;" width="23" height="21" viewBox="0 0 23 21"><path d="M1.500 2.500h4v4.500h11v-4.500h4v11.500h-19z" fill="#dfe6ee" stroke="#1b2431" stroke-width=".7"/><rect x="6.500" y="1" width="6" height="6" fill="#fff" stroke="#1b2431" stroke-width=".7"/><path d="M8 2.300v3.400M11 2.300v3.400M8 4h3" stroke="#1b2431" stroke-width=".9"/><rect x="1.500" y="15.500" width="19" height="4" fill="#dfe6ee" stroke="#1b2431" stroke-width=".7"/></svg>
<svg class="b" style="left:1267px;top:829px;" width="22" height="22" viewBox="0 0 22 22"><polygon points="1.500,11 6.300,2.500 15.700,2.500 20.500,11 15.700,19.500 6.300,19.500" fill="none" stroke="#fff" stroke-width="1.800"/></svg>
<svg class="b" style="left:1299px;top:829.5px;" width="21" height="21" viewBox="0 0 21 21"><polygon points="20.50,8.47 20.50,12.53 17.59,13.25 17.45,13.57 19.00,16.14 16.14,19.00 13.57,17.45 13.25,17.59 12.53,20.50 8.47,20.50 7.75,17.59 7.43,17.45 4.86,19.00 2.00,16.14 3.55,13.57 3.41,13.25 0.50,12.53 0.50,8.47 3.41,7.75 3.55,7.43 2.00,4.86 4.86,2.00 7.43,3.55 7.75,3.41 8.47,0.50 12.53,0.50 13.25,3.41 13.57,3.55 16.14,2.00 19.00,4.86 17.45,7.43 17.59,7.75" fill="#f2f4f7"/><circle cx="10.500" cy="10.500" r="5.200" fill="#7fa3d0"/><circle cx="10.500" cy="10.500" r="3.300" fill="#304056"/><circle cx="10.500" cy="10.500" r="2.100" fill="#a8c8ee"/></svg>
<svg class="b" style="left:1479px;top:831.5px;" width="17" height="17" viewBox="0 0 17 17"><line x1="10" y1="10" x2="15" y2="15" stroke="#7d838b" stroke-width="3.200" stroke-linecap="round"/><line x1="10" y1="10" x2="15" y2="15" stroke="#e4e8ed" stroke-width="1.600" stroke-linecap="round"/><circle cx="6.800" cy="6.800" r="5.400" fill="#dfe6ee" stroke="#c9ced5" stroke-width="1.200"/><path d="M3.600 6.800h6.400M6.800 3.600v6.400" stroke="#304056" stroke-width="1.700"/></svg>
<svg class="b" style="left:1511px;top:831.5px;" width="17" height="17" viewBox="0 0 17 17"><line x1="10" y1="10" x2="15" y2="15" stroke="#7d838b" stroke-width="3.200" stroke-linecap="round"/><line x1="10" y1="10" x2="15" y2="15" stroke="#e4e8ed" stroke-width="1.600" stroke-linecap="round"/><circle cx="6.800" cy="6.800" r="5.400" fill="#dfe6ee" stroke="#c9ced5" stroke-width="1.200"/><path d="M3.600 6.800h6.400" stroke="#304056" stroke-width="1.700"/></svg>
<svg class="b" style="left:1542px;top:831px;" width="18" height="18" viewBox="0 0 18 18"><rect width="18" height="18" fill="#a8c8ee"/><path d="M2.500 4h13M2.500 7.300h13M2.500 10.600h13M2.500 13.900h13" stroke="#6f9ad0" stroke-width="1.300"/></svg>
<svg class="b" style="left:1574px;top:831px;" width="19" height="18" viewBox="0 0 19 18"><rect width="19" height="18" fill="#a8c8ee"/><circle cx="6.500" cy="5.500" r="3" fill="#dce9f8" stroke="#5d83b5" stroke-width=".7"/><circle cx="12.500" cy="8.500" r="3.300" fill="#dce9f8" stroke="#5d83b5" stroke-width=".7"/><circle cx="6.500" cy="12.500" r="3" fill="#dce9f8" stroke="#5d83b5" stroke-width=".7"/></svg>
<div class="b" style="left:1097px;top:860px;width:503px;height:1px;background:#40597a;"></div>
<div class="b" style="left:1097px;top:861px;width:58.5px;height:23.5px;background:#48637f;"></div>
<span class="t " style="left:1102px;top:865.5px;font-size:12px;color:#8b9fb6;letter-spacing:-0.08px;">Inspector</span>
<div class="b" style="left:1157px;top:861px;width:95px;height:26px;background:#5a7592;"></div>
<span class="t " style="left:1162.7px;top:866.7px;font-size:12px;color:#fff;letter-spacing:-0.29px;">Assets - Alkanes</span>
<!-- status -->
<span class="t " style="left:5px;top:892.5px;font-size:12px;color:#fff;letter-spacing:-0.37px;">3 nodes erased</span>
<span class="t " style="left:1419px;top:893px;font-size:12px;color:#8fb9ec;letter-spacing:-0.00px;text-decoration:underline;">Support</span>
<span class="t " style="left:1481px;top:893px;font-size:12px;color:#8fb9ec;letter-spacing:-0.69px;text-decoration:underline;">SAMSON 2023 R1</span>
<div class="b" style="left:1578px;top:890px;width:1px;height:20px;background:#c8d4e2;"></div>
<svg class="b" style="left:1591px;top:898.5px;" width="8" height="8" viewBox="0 0 8 8"><polygon points="8,0 8,8 0,8" fill="#4a78b4"/></svg>
</body></html>
